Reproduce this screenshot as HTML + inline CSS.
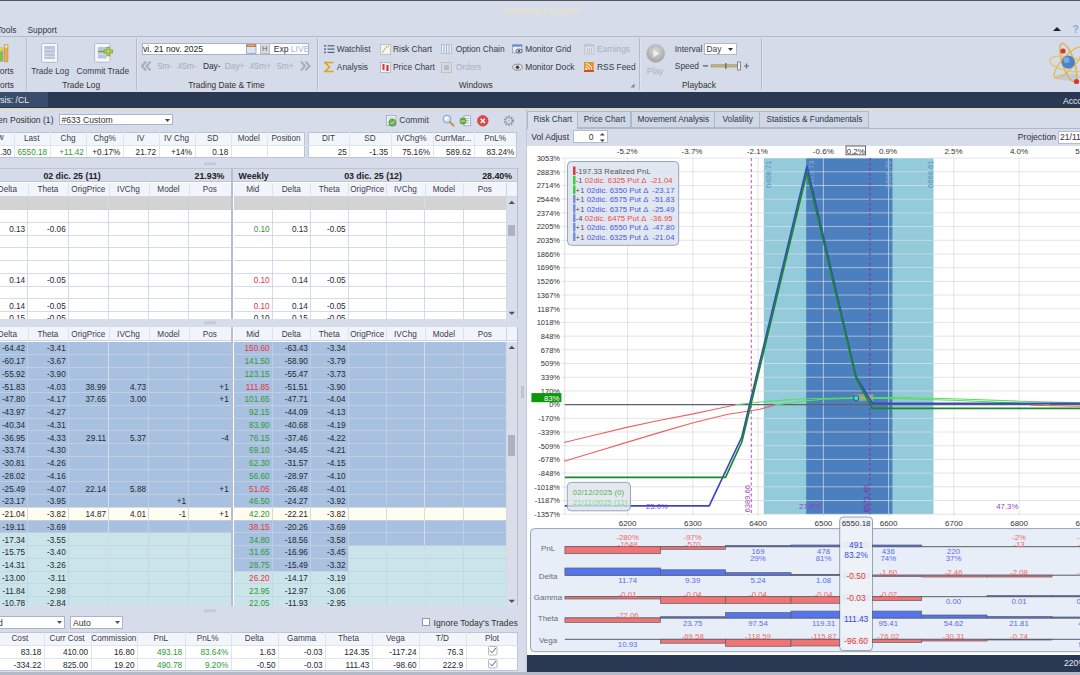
<!DOCTYPE html><html><head><meta charset="utf-8"><style>
html,body{margin:0;padding:0;width:1080px;height:675px;overflow:hidden;background:#d6dce9;}
body{position:relative;font-family:"Liberation Sans",sans-serif;font-size:8.2px;color:#363c4a;}
.t{position:absolute;white-space:nowrap;overflow:visible;}
</style></head><body>
<div style="position:absolute;left:0.00px;top:0.00px;width:1080.00px;height:1.30px;background:#50555f"></div>
<div style="position:absolute;left:0.00px;top:1.30px;width:1080.00px;height:35.00px;background:#d6dce9"></div>
<div class="t" style="left:442.00px;top:5.00px;width:200.00px;height:12.00px;line-height:12.00px;text-align:center;color:#ebe3c3;font-size:8.6px">OptionNET Explorer</div>
<div class="t" style="left:-283.50px;top:23.60px;width:300.00px;height:12.00px;line-height:12.00px;text-align:right;font-size:8.4px;color:#2f3a4a">Tools</div>
<div class="t" style="left:27.50px;top:23.60px;width:300.00px;height:12.00px;line-height:12.00px;text-align:left;font-size:8.4px;color:#2f3a4a">Support</div>
<svg style="position:absolute;left:1052px;top:26px" width="10" height="6"><path d="M1 5 L5 1 L9 5 Z" fill="#222"/></svg>
<div class="t" style="left:1072.50px;top:23.50px;width:300.00px;height:12.00px;line-height:12.00px;text-align:left;color:#7ab0e0;font-weight:bold;font-size:10px">?</div>
<div style="position:absolute;left:0.00px;top:36.00px;width:1080.00px;height:1.00px;background:#b3bbca"></div>
<div style="position:absolute;left:0.00px;top:37.00px;width:1080.00px;height:54.60px;background:#d5dbe8"></div>
<div style="position:absolute;left:25.60px;top:38.00px;width:1.00px;height:52.00px;background:#b4bccb"></div>
<div style="position:absolute;left:26.60px;top:38.00px;width:1.00px;height:52.00px;background:#dfe4ee"></div>
<div style="position:absolute;left:135.60px;top:38.00px;width:1.00px;height:52.00px;background:#b4bccb"></div>
<div style="position:absolute;left:136.60px;top:38.00px;width:1.00px;height:52.00px;background:#dfe4ee"></div>
<div style="position:absolute;left:317.00px;top:38.00px;width:1.00px;height:52.00px;background:#b4bccb"></div>
<div style="position:absolute;left:318.00px;top:38.00px;width:1.00px;height:52.00px;background:#dfe4ee"></div>
<div style="position:absolute;left:638.70px;top:38.00px;width:1.00px;height:52.00px;background:#b4bccb"></div>
<div style="position:absolute;left:639.70px;top:38.00px;width:1.00px;height:52.00px;background:#dfe4ee"></div>
<div style="position:absolute;left:760.60px;top:38.00px;width:1.00px;height:52.00px;background:#b4bccb"></div>
<div style="position:absolute;left:761.60px;top:38.00px;width:1.00px;height:52.00px;background:#dfe4ee"></div>
<svg style="position:absolute;left:0px;top:44px" width="12" height="19"><rect x="0" y="3.6" width="3.3" height="14.2" fill="#8cb860"/><path d="M0 3.6 L3.3 3.6 L3.3 6 L0 8 Z" fill="#e0d050"/><rect x="4.3" y="0.3" width="3.6" height="17.5" rx="0.8" fill="#e8b050" stroke="#b88040" stroke-width="0.6"/><rect x="4.8" y="0.8" width="2.6" height="3" fill="#f4e0a8"/></svg>
<div class="t" style="left:-286.20px;top:65.30px;width:300.00px;height:12.00px;line-height:12.00px;text-align:right;font-size:8.4px">orts</div>
<div class="t" style="left:-286.00px;top:79.00px;width:300.00px;height:12.00px;line-height:12.00px;text-align:right;font-size:8.4px;color:#333">orts</div>
<svg style="position:absolute;left:41px;top:43px" width="18" height="20"><rect x="0.6" y="0.4" width="16" height="19" rx="1.2" fill="#f6f8fc" stroke="#a8b6cc" stroke-width="0.9"/><rect x="3.3" y="3" width="10.7" height="13" fill="#b9c6dd"/><g fill="#d4ddec"><rect x="3.3" y="6" width="10.7" height="1.1"/><rect x="3.3" y="9.6" width="10.7" height="1.1"/><rect x="3.3" y="13" width="10.7" height="1.1"/></g></svg>
<div class="t" style="left:-49.80px;top:65.30px;width:200.00px;height:12.00px;line-height:12.00px;text-align:center;font-size:8.4px">Trade Log</div>
<svg style="position:absolute;left:93.5px;top:43px" width="21" height="20"><rect x="0.6" y="0.4" width="15.4" height="18.8" rx="1.2" fill="#f6f8fc" stroke="#a8b6cc" stroke-width="0.9"/><rect x="3.8" y="4" width="8.8" height="11.5" fill="#b9c6dd"/><rect x="3.8" y="11" width="8.8" height="1" fill="#d4ddec"/><rect x="4" y="7.9" width="7" height="1.1" fill="#70a040"/><path d="M12.9 4.2 h2.8 v2.9 h2.9 v2.8 h-2.9 v2.9 h-2.8 v-2.9 h-2.9 v-2.8 h2.9 z" fill="#c8c850" stroke="#58a838" stroke-width="0.8"/></svg>
<div class="t" style="left:2.80px;top:65.30px;width:200.00px;height:12.00px;line-height:12.00px;text-align:center;font-size:8.4px">Commit Trade</div>
<div class="t" style="left:-18.80px;top:79.00px;width:200.00px;height:12.00px;line-height:12.00px;text-align:center;font-size:8.4px;color:#333">Trade Log</div>
<div style="position:absolute;left:141.60px;top:42.60px;width:167.10px;height:12.50px;background:#fff;border:1px solid #a9b4c6;box-sizing:border-box"></div>
<div class="t" style="left:143.00px;top:43.00px;width:300.00px;height:12.00px;line-height:12.00px;text-align:left;font-size:8.6px;color:#222">vi. 21 nov. 2025</div>
<svg style="position:absolute;left:246px;top:44px" width="11" height="10"><rect x="0.5" y="0.5" width="9.5" height="9" fill="#dce4f0" stroke="#8aa0c0" stroke-width="0.8"/><rect x="0.5" y="0.5" width="9.5" height="2.5" fill="#e07050"/><rect x="2" y="1" width="6" height="1" fill="#e8b040"/></svg>
<div style="position:absolute;left:259.60px;top:43.40px;width:10.20px;height:10.80px;background:#d9dbe0;border:1px solid #b8bcc4;box-sizing:border-box"></div>
<div class="t" style="left:164.70px;top:43.00px;width:200.00px;height:12.00px;line-height:12.00px;text-align:center;font-size:7.5px;color:#666">H</div>
<div class="t" style="left:273.70px;top:43.00px;width:300.00px;height:12.00px;line-height:12.00px;text-align:left;font-size:8.6px;color:#2a3040">Exp</div>
<div class="t" style="left:290.80px;top:43.00px;width:300.00px;height:12.00px;line-height:12.00px;text-align:left;font-size:8.6px;color:#a9b5c8">LIVE</div>
<svg style="position:absolute;left:141px;top:61px" width="11" height="10"><path d="M5 0.5 L1 5 L5 9.5 M9.5 0.5 L5.5 5 L9.5 9.5" fill="none" stroke="#a8adb8" stroke-width="2"/></svg>
<svg style="position:absolute;left:300px;top:61px" width="11" height="10"><path d="M1 0.5 L5 5 L1 9.5 M5.5 0.5 L9.5 5 L5.5 9.5" fill="none" stroke="#a8adb8" stroke-width="2"/></svg>
<div class="t" style="left:157.70px;top:59.60px;width:300.00px;height:12.00px;line-height:12.00px;text-align:left;color:#a3aec2;font-size:8.4px">5m-</div>
<div class="t" style="left:177.50px;top:59.60px;width:300.00px;height:12.00px;line-height:12.00px;text-align:left;color:#a3aec2;font-size:8.4px">45m-</div>
<div class="t" style="left:202.90px;top:59.60px;width:300.00px;height:12.00px;line-height:12.00px;text-align:left;font-size:8.4px;color:#2a3040">Day-</div>
<div class="t" style="left:224.70px;top:59.60px;width:300.00px;height:12.00px;line-height:12.00px;text-align:left;color:#a3aec2;font-size:8.4px">Day+</div>
<div class="t" style="left:249.60px;top:59.60px;width:300.00px;height:12.00px;line-height:12.00px;text-align:left;color:#a3aec2;font-size:8.4px">45m+</div>
<div class="t" style="left:277.00px;top:59.60px;width:300.00px;height:12.00px;line-height:12.00px;text-align:left;color:#a3aec2;font-size:8.4px">5m+</div>
<div class="t" style="left:126.40px;top:79.00px;width:200.00px;height:12.00px;line-height:12.00px;text-align:center;font-size:8.4px;color:#333">Trading Date &amp; Time</div>
<svg style="position:absolute;left:323.5px;top:44px" width="11" height="10"><g fill="#5070a8"><rect x="0" y="1" width="2" height="1.6"/><rect x="0" y="4.3" width="2" height="1.6"/><rect x="0" y="7.6" width="2" height="1.6"/></g><g fill="#506080"><rect x="3.5" y="1.2" width="7" height="1.2"/><rect x="3.5" y="4.5" width="7" height="1.2"/><rect x="3.5" y="7.8" width="7" height="1.2"/></g></svg>
<div class="t" style="left:336.80px;top:43.10px;width:300.00px;height:12.00px;line-height:12.00px;text-align:left;font-size:8.4px">Watchlist</div>
<svg style="position:absolute;left:379.5px;top:43.5px" width="11" height="11"><rect x="0.5" y="0.5" width="10" height="10" fill="#f6f6f0" stroke="#b0b8c4" stroke-width="0.8"/><path d="M2 9 C4 8 4 3 9 2" fill="none" stroke="#c09040" stroke-width="0.9"/></svg>
<div class="t" style="left:393.00px;top:43.10px;width:300.00px;height:12.00px;line-height:12.00px;text-align:left;font-size:8.4px">Risk Chart</div>
<svg style="position:absolute;left:441.4px;top:44px" width="11" height="10"><rect x="0.5" y="0.5" width="10" height="9" fill="#eef2f8" stroke="#a8b8d0" stroke-width="0.8"/><g fill="#90b0d8"><rect x="2.5" y="1" width="1" height="8"/><rect x="5" y="1" width="1" height="8"/><rect x="7.5" y="1" width="1" height="8"/></g></svg>
<div class="t" style="left:455.70px;top:43.10px;width:300.00px;height:12.00px;line-height:12.00px;text-align:left;font-size:8.4px">Option Chain</div>
<svg style="position:absolute;left:511.5px;top:44px" width="12" height="11"><rect x="0.5" y="0.8" width="9.5" height="8" fill="#e6ecf6" stroke="#7a94bc" stroke-width="0.7"/><rect x="0.5" y="0.8" width="9.5" height="1.8" fill="#5a8ad0"/><ellipse cx="7" cy="7" rx="3.2" ry="2" fill="#d8dde6" stroke="#3a4458" stroke-width="0.7"/><circle cx="7" cy="7" r="1" fill="#2a3040"/></svg>
<div class="t" style="left:525.20px;top:43.10px;width:300.00px;height:12.00px;line-height:12.00px;text-align:left;font-size:8.4px">Monitor Grid</div>
<svg style="position:absolute;left:583.5px;top:43.5px" width="11" height="11"><rect x="0.5" y="0.5" width="9.5" height="9.5" rx="1" fill="#e0e2e6" stroke="#b8bcc4" stroke-width="0.8"/><rect x="0.5" y="0.5" width="9.5" height="2.2" fill="#c4c8ce"/><g fill="#b8bcc4"><rect x="3" y="4" width="0.8" height="5"/><rect x="5" y="4" width="0.8" height="5"/><rect x="7" y="4" width="0.8" height="5"/></g></svg>
<div class="t" style="left:597.00px;top:43.10px;width:300.00px;height:12.00px;line-height:12.00px;text-align:left;font-size:8.4px;color:#a8b2c4">Earnings</div>
<svg style="position:absolute;left:323.5px;top:61px" width="11" height="12"><path d="M9.5 1.5 H1 L5.5 6 L1 10.5 H9.5" fill="none" stroke="#e0a020" stroke-width="1.6"/></svg>
<div class="t" style="left:336.80px;top:60.80px;width:300.00px;height:12.00px;line-height:12.00px;text-align:left;font-size:8.4px">Analysis</div>
<svg style="position:absolute;left:380px;top:61.5px" width="11" height="11"><rect x="0.5" y="0.5" width="10" height="10" fill="#f4f0f0" stroke="#a8b0bc" stroke-width="0.8"/><rect x="2.5" y="2" width="2" height="6" fill="#e03030"/><rect x="6.5" y="3" width="2" height="6" fill="#d02828"/></svg>
<div class="t" style="left:393.00px;top:60.80px;width:300.00px;height:12.00px;line-height:12.00px;text-align:left;font-size:8.4px">Price Chart</div>
<svg style="position:absolute;left:441.4px;top:61.5px" width="11" height="11"><rect x="0.5" y="0.5" width="10" height="10" fill="#d8dade" stroke="#b8bcc4" stroke-width="0.8"/><rect x="3" y="3" width="5" height="5" fill="#b8bcc4"/></svg>
<div class="t" style="left:455.70px;top:60.80px;width:300.00px;height:12.00px;line-height:12.00px;text-align:left;font-size:8.4px;color:#a8b2c4">Orders</div>
<svg style="position:absolute;left:511.5px;top:62.5px" width="11" height="9"><ellipse cx="5.5" cy="4.2" rx="4.8" ry="3" fill="#dfe3ea" stroke="#8a7060" stroke-width="0.8"/><circle cx="5.5" cy="4.2" r="1.8" fill="#38425a"/></svg>
<div class="t" style="left:525.20px;top:60.80px;width:300.00px;height:12.00px;line-height:12.00px;text-align:left;font-size:8.4px">Monitor Dock</div>
<svg style="position:absolute;left:583.5px;top:61.5px" width="11" height="11"><rect x="0" y="0" width="9.8" height="9.8" fill="#e89030"/><rect x="0" y="8.3" width="9.8" height="1.5" fill="#d03818"/><circle cx="2.3" cy="7" r="1" fill="#fff"/><path d="M1.8 4 A3.5 3.5 0 0 1 5.3 7.5 M1.8 1.6 A5.9 5.9 0 0 1 7.7 7.5" fill="none" stroke="#fff" stroke-width="1"/></svg>
<div class="t" style="left:597.00px;top:60.80px;width:300.00px;height:12.00px;line-height:12.00px;text-align:left;font-size:8.4px">RSS Feed</div>
<div class="t" style="left:375.70px;top:78.90px;width:200.00px;height:12.00px;line-height:12.00px;text-align:center;font-size:8.4px;color:#333">Windows</div>
<svg style="position:absolute;left:630px;top:83px" width="5" height="5"><path d="M4.5 0.5 V4.5 H0.5 Z" fill="#7a8494"/></svg>
<svg style="position:absolute;left:645.5px;top:43.5px" width="20" height="20"><defs><radialGradient id="pg" cx="50%" cy="35%" r="60%"><stop offset="0" stop-color="#d8d8d8"/><stop offset="1" stop-color="#a8a8aa"/></radialGradient></defs><circle cx="9.7" cy="9.5" r="9" fill="url(#pg)" stroke="#b0b0b4" stroke-width="0.6"/><path d="M7.3 5.5 L13.5 9.5 L7.3 13.5 Z" fill="#eeeeee"/></svg>
<div class="t" style="left:555.00px;top:64.80px;width:200.00px;height:12.00px;line-height:12.00px;text-align:center;font-size:8.4px;color:#a8b2c4">Play</div>
<div class="t" style="left:674.80px;top:43.30px;width:300.00px;height:12.00px;line-height:12.00px;text-align:left;font-size:8.4px">Interval</div>
<div style="position:absolute;left:703.60px;top:42.80px;width:33.40px;height:12.40px;background:#fff;border:1px solid #b0bacb;box-sizing:border-box"></div>
<div class="t" style="left:706.50px;top:43.00px;width:300.00px;height:12.00px;line-height:12.00px;text-align:left;font-size:8.4px">Day</div>
<svg style="position:absolute;left:728px;top:47.5px" width="6" height="4"><path d="M0 0 H5 L2.5 3 Z" fill="#333"/></svg>
<div class="t" style="left:674.80px;top:60.10px;width:300.00px;height:12.00px;line-height:12.00px;text-align:left;font-size:8.4px">Speed</div>
<svg style="position:absolute;left:702px;top:61px" width="50" height="10"><rect x="1" y="4.2" width="5" height="1.4" fill="#606a7a"/><rect x="9" y="3.8" width="29" height="2.2" fill="#c8b878" stroke="#8a8060" stroke-width="0.5"/><rect x="23" y="2" width="1.5" height="6" fill="#707070"/><rect x="35.5" y="1" width="3" height="8" fill="#f0f0f0" stroke="#606060" stroke-width="0.7"/><path d="M42 5 h5 M44.5 2.5 v5" stroke="#606a7a" stroke-width="1.2"/></svg>
<div class="t" style="left:599.00px;top:78.80px;width:200.00px;height:12.00px;line-height:12.00px;text-align:center;font-size:8.4px;color:#333">Playback</div>
<svg style="position:absolute;left:1046px;top:40px" width="40" height="46" viewBox="0 0 40 46">
<ellipse cx="22" cy="37" rx="13" ry="3.5" fill="#b0b6c4" opacity="0.45"/>
<ellipse cx="22.3" cy="22.5" rx="20" ry="6.5" transform="rotate(-48 22.3 22.5)" fill="none" stroke="#e2bc58" stroke-width="1.5"/>
<ellipse cx="22.3" cy="22.5" rx="20" ry="6" transform="rotate(72 22.3 22.5)" fill="none" stroke="#dcb450" stroke-width="1.5"/>
<ellipse cx="22.3" cy="24" rx="19" ry="7" transform="rotate(12 22.3 24)" fill="none" stroke="#e6c468" stroke-width="1.3"/>
<circle cx="22.3" cy="22.2" r="6.6" fill="#4d82c8"/><circle cx="20.5" cy="20" r="3" fill="#8ab4e8" opacity="0.8"/>
<circle cx="17" cy="11" r="2.6" fill="#d83828"/><circle cx="30.5" cy="41.5" r="2.6" fill="#d83828"/>
</svg>
<div style="position:absolute;left:0.00px;top:91.60px;width:1080.00px;height:16.00px;background:#293853"></div>
<div style="position:absolute;left:0.00px;top:92.20px;width:48.00px;height:14.50px;background:#3b4d6c"></div>
<div class="t" style="left:-4.00px;top:93.50px;width:300.00px;height:12.00px;line-height:12.00px;text-align:left;color:#e8ecf4;font-size:8.6px">ysis: /CL</div>
<div class="t" style="left:1063.00px;top:94.80px;width:300.00px;height:12.00px;line-height:12.00px;text-align:left;color:#e8ecf4;font-size:8.6px">Acco</div>
<div style="position:absolute;left:0.00px;top:107.60px;width:1080.00px;height:1.60px;background:#e6dc9c"></div>
<div class="t" style="left:-246.50px;top:114.00px;width:300.00px;height:12.00px;line-height:12.00px;text-align:right;font-size:8.6px;color:#333">en Position (1)</div>
<div style="position:absolute;left:59.00px;top:114.30px;width:113.50px;height:11.20px;background:#fff;border:1px solid #aab4c4;box-sizing:border-box"></div>
<div class="t" style="left:61.50px;top:114.00px;width:300.00px;height:12.00px;line-height:12.00px;text-align:left;font-size:8.6px;color:#333">#633 Custom</div>
<svg style="position:absolute;left:164.5px;top:118.5px" width="6" height="4"><path d="M0 0 H5 L2.5 3 Z" fill="#444"/></svg>
<svg style="position:absolute;left:385.5px;top:114.5px" width="13" height="13"><rect x="0.5" y="0.5" width="9.5" height="10" fill="#f2f4f8" stroke="#98a6bc" stroke-width="0.8"/><rect x="2" y="2.5" width="6" height="1" fill="#b8c4d8"/><circle cx="6.3" cy="7.6" r="3.6" fill="#6ab04a" stroke="#4a8a30" stroke-width="0.6"/><path d="M4.4 7.6 l1.4 1.3 l2.4 -2.6" stroke="#e8f4e0" stroke-width="0.9" fill="none"/></svg>
<div class="t" style="left:399.30px;top:114.40px;width:300.00px;height:12.00px;line-height:12.00px;text-align:left;font-size:8.6px;color:#3a4050">Commit</div>
<svg style="position:absolute;left:441.5px;top:114px" width="13" height="13"><circle cx="5" cy="5" r="3.9" fill="#d4e6f6" stroke="#7aa2cc" stroke-width="1"/><circle cx="4.2" cy="4.2" r="1.6" fill="#f4faff"/><path d="M7.8 7.8 L11.5 11.5" stroke="#c8903c" stroke-width="1.8" stroke-linecap="round"/></svg>
<svg style="position:absolute;left:459px;top:114.5px" width="13" height="12"><rect x="5" y="0.8" width="6.5" height="10" fill="#f4f6f8" stroke="#8a9aae" stroke-width="0.7"/><g fill="#9aa8bc"><rect x="7" y="3" width="3" height="0.8"/><rect x="7" y="5.3" width="3" height="0.8"/><rect x="7" y="7.6" width="3" height="0.8"/></g><circle cx="4" cy="6" r="3.4" fill="#5aa848"/><rect x="1.5" y="5.5" width="4.5" height="1.2" fill="#e8d060"/></svg>
<svg style="position:absolute;left:476.5px;top:114.5px" width="12" height="12"><circle cx="5.8" cy="5.8" r="5.3" fill="#e04848" stroke="#c03030" stroke-width="0.6"/><path d="M3.7 3.7 L7.9 7.9 M7.9 3.7 L3.7 7.9" stroke="#fff" stroke-width="1.4"/></svg>
<svg style="position:absolute;left:503px;top:114.5px" width="12" height="12"><circle cx="5.8" cy="5.8" r="4.2" fill="none" stroke="#8a92a4" stroke-width="2" stroke-dasharray="1.5 1.2"/><circle cx="5.8" cy="5.8" r="3" fill="#e4e8ee" stroke="#8a92a4" stroke-width="0.8"/><circle cx="5.8" cy="5.8" r="1.2" fill="#b8c0cc"/></svg>
<div style="position:absolute;left:-22.00px;top:131.60px;width:327.10px;height:26.90px;background:#fff;border:1px solid #bcc5d4;box-sizing:border-box"></div>
<div style="position:absolute;left:-21.00px;top:132.60px;width:325.10px;height:12.20px;background:#f2f6fb"></div>
<div style="position:absolute;left:-22.00px;top:144.80px;width:327.10px;height:1.00px;background:#dfe5ee"></div>
<div style="position:absolute;left:13.80px;top:131.60px;width:1.00px;height:25.90px;background:#dfe5ee"></div>
<div style="position:absolute;left:49.60px;top:131.60px;width:1.00px;height:25.90px;background:#dfe5ee"></div>
<div style="position:absolute;left:86.40px;top:131.60px;width:1.00px;height:25.90px;background:#dfe5ee"></div>
<div style="position:absolute;left:122.80px;top:131.60px;width:1.00px;height:25.90px;background:#dfe5ee"></div>
<div style="position:absolute;left:158.60px;top:131.60px;width:1.00px;height:25.90px;background:#dfe5ee"></div>
<div style="position:absolute;left:194.60px;top:131.60px;width:1.00px;height:25.90px;background:#dfe5ee"></div>
<div style="position:absolute;left:230.70px;top:131.60px;width:1.00px;height:25.90px;background:#dfe5ee"></div>
<div style="position:absolute;left:266.90px;top:131.60px;width:1.00px;height:25.90px;background:#dfe5ee"></div>
<div class="t" style="left:-32.00px;top:132.50px;width:55.80px;height:12.00px;line-height:12.00px;text-align:center;font-size:8.2px;color:#242830;color:#3a3a4a"></div>
<div class="t" style="left:3.80px;top:132.50px;width:55.80px;height:12.00px;line-height:12.00px;text-align:center;font-size:8.2px;color:#242830;color:#3a3a4a">Last</div>
<div class="t" style="left:39.60px;top:132.50px;width:56.80px;height:12.00px;line-height:12.00px;text-align:center;font-size:8.2px;color:#242830;color:#3a3a4a">Chg</div>
<div class="t" style="left:76.40px;top:132.50px;width:56.40px;height:12.00px;line-height:12.00px;text-align:center;font-size:8.2px;color:#242830;color:#3a3a4a">Chg%</div>
<div class="t" style="left:112.80px;top:132.50px;width:55.80px;height:12.00px;line-height:12.00px;text-align:center;font-size:8.2px;color:#242830;color:#3a3a4a">IV</div>
<div class="t" style="left:148.60px;top:132.50px;width:56.00px;height:12.00px;line-height:12.00px;text-align:center;font-size:8.2px;color:#242830;color:#3a3a4a">IV Chg</div>
<div class="t" style="left:184.60px;top:132.50px;width:56.10px;height:12.00px;line-height:12.00px;text-align:center;font-size:8.2px;color:#242830;color:#3a3a4a">SD</div>
<div class="t" style="left:220.70px;top:132.50px;width:56.20px;height:12.00px;line-height:12.00px;text-align:center;font-size:8.2px;color:#242830;color:#3a3a4a">Model</div>
<div class="t" style="left:256.90px;top:132.50px;width:58.20px;height:12.00px;line-height:12.00px;text-align:center;font-size:8.2px;color:#242830;color:#3a3a4a">Position</div>
<div class="t" style="left:-288.70px;top:146.65px;width:300.00px;height:12.00px;line-height:12.00px;text-align:right;font-size:8.2px;color:#242830;">.30</div>
<div class="t" style="left:-252.90px;top:146.65px;width:300.00px;height:12.00px;line-height:12.00px;text-align:right;font-size:8.2px;color:#242830;color:#2e9a32;">6550.18</div>
<div class="t" style="left:-216.10px;top:146.65px;width:300.00px;height:12.00px;line-height:12.00px;text-align:right;font-size:8.2px;color:#242830;color:#2e9a32;">+11.42</div>
<div class="t" style="left:-179.70px;top:146.65px;width:300.00px;height:12.00px;line-height:12.00px;text-align:right;font-size:8.2px;color:#242830;">+0.17%</div>
<div class="t" style="left:-143.90px;top:146.65px;width:300.00px;height:12.00px;line-height:12.00px;text-align:right;font-size:8.2px;color:#242830;">21.72</div>
<div class="t" style="left:-107.90px;top:146.65px;width:300.00px;height:12.00px;line-height:12.00px;text-align:right;font-size:8.2px;color:#242830;">+14%</div>
<div class="t" style="left:-71.80px;top:146.65px;width:300.00px;height:12.00px;line-height:12.00px;text-align:right;font-size:8.2px;color:#242830;">0.18</div>
<div class="t" style="left:-296.30px;top:132.40px;width:300.00px;height:12.00px;line-height:12.00px;text-align:right;font-size:8.2px;color:#242830;color:#3a3a4a">w</div>
<div style="position:absolute;left:307.70px;top:131.60px;width:209.10px;height:26.90px;background:#fff;border:1px solid #bcc5d4;box-sizing:border-box"></div>
<div style="position:absolute;left:308.70px;top:132.60px;width:207.10px;height:12.20px;background:#f2f6fb"></div>
<div style="position:absolute;left:307.70px;top:144.80px;width:209.10px;height:1.00px;background:#dfe5ee"></div>
<div style="position:absolute;left:349.40px;top:131.60px;width:1.00px;height:25.90px;background:#dfe5ee"></div>
<div style="position:absolute;left:390.50px;top:131.60px;width:1.00px;height:25.90px;background:#dfe5ee"></div>
<div style="position:absolute;left:432.50px;top:131.60px;width:1.00px;height:25.90px;background:#dfe5ee"></div>
<div style="position:absolute;left:473.60px;top:131.60px;width:1.00px;height:25.90px;background:#dfe5ee"></div>
<div class="t" style="left:297.70px;top:132.50px;width:61.70px;height:12.00px;line-height:12.00px;text-align:center;font-size:8.2px;color:#242830;color:#3a3a4a">DIT</div>
<div class="t" style="left:339.40px;top:132.50px;width:61.10px;height:12.00px;line-height:12.00px;text-align:center;font-size:8.2px;color:#242830;color:#3a3a4a">SD</div>
<div class="t" style="left:380.50px;top:132.50px;width:62.00px;height:12.00px;line-height:12.00px;text-align:center;font-size:8.2px;color:#242830;color:#3a3a4a">IVChg%</div>
<div class="t" style="left:422.50px;top:132.50px;width:61.10px;height:12.00px;line-height:12.00px;text-align:center;font-size:8.2px;color:#242830;color:#3a3a4a">CurrMar...</div>
<div class="t" style="left:463.60px;top:132.50px;width:63.20px;height:12.00px;line-height:12.00px;text-align:center;font-size:8.2px;color:#242830;color:#3a3a4a">PnL%</div>
<div class="t" style="left:46.90px;top:146.65px;width:300.00px;height:12.00px;line-height:12.00px;text-align:right;font-size:8.2px;color:#242830;">25</div>
<div class="t" style="left:88.00px;top:146.65px;width:300.00px;height:12.00px;line-height:12.00px;text-align:right;font-size:8.2px;color:#242830;">-1.35</div>
<div class="t" style="left:130.00px;top:146.65px;width:300.00px;height:12.00px;line-height:12.00px;text-align:right;font-size:8.2px;color:#242830;">75.16%</div>
<div class="t" style="left:171.10px;top:146.65px;width:300.00px;height:12.00px;line-height:12.00px;text-align:right;font-size:8.2px;color:#242830;">589.62</div>
<div class="t" style="left:214.30px;top:146.65px;width:300.00px;height:12.00px;line-height:12.00px;text-align:right;font-size:8.2px;color:#242830;">83.24%</div>
<svg style="position:absolute;left:204.0px;top:162.0px" width="13" height="4"><g stroke="#a3abbb" stroke-width="0.6" fill="none"><path d="M0.2 0.3 L2.6 3.2 M2.6 0.3 L0.2 3.2"/><path d="M3.2 0.3 L5.6 3.2 M5.6 0.3 L3.2 3.2"/><path d="M6.2 0.3 L8.6 3.2 M8.6 0.3 L6.2 3.2"/><path d="M9.2 0.3 L11.6 3.2 M11.6 0.3 L9.2 3.2"/></g></svg>
<div style="position:absolute;left:-2.00px;top:168.30px;width:235.10px;height:151.10px;background:#fff"></div>
<div style="position:absolute;left:231.20px;top:168.30px;width:2.60px;height:151.10px;background:#b6bfcd"></div>
<div style="position:absolute;left:233.10px;top:168.30px;width:284.30px;height:151.10px;background:#fff"></div>
<div style="position:absolute;left:517.40px;top:168.30px;width:1.00px;height:151.10px;background:#b6bfcd"></div>
<div style="position:absolute;left:-2.00px;top:168.30px;width:233.20px;height:14.20px;background:#d5dbe8;border-bottom:1px solid #bcc5d3;box-sizing:border-box"></div>
<div style="position:absolute;left:233.10px;top:168.30px;width:284.30px;height:14.20px;background:#d5dbe8;border-bottom:1px solid #bcc5d3;box-sizing:border-box"></div>
<div style="position:absolute;left:233.10px;top:168.30px;width:284.30px;height:1.00px;background:#bcc5d3"></div>
<div style="position:absolute;left:-2.00px;top:168.30px;width:233.20px;height:1.00px;background:#bcc5d3"></div>
<div style="position:absolute;left:-2.00px;top:182.50px;width:233.20px;height:14.30px;background:#f1f5fb;border-bottom:1px solid #d0d7e2;box-sizing:border-box"></div>
<div style="position:absolute;left:233.80px;top:182.50px;width:283.60px;height:14.30px;background:#f1f5fb;border-bottom:1px solid #d0d7e2;box-sizing:border-box"></div>
<div class="t" style="left:-22.80px;top:183.95px;width:60.40px;height:12.00px;line-height:12.00px;text-align:center;font-size:8.2px;color:#242830;color:#3a3a4a">Delta</div>
<div class="t" style="left:17.60px;top:183.95px;width:60.60px;height:12.00px;line-height:12.00px;text-align:center;font-size:8.2px;color:#242830;color:#3a3a4a">Theta</div>
<div class="t" style="left:58.20px;top:183.95px;width:60.30px;height:12.00px;line-height:12.00px;text-align:center;font-size:8.2px;color:#242830;color:#3a3a4a">OrigPrice</div>
<div class="t" style="left:98.50px;top:183.95px;width:60.00px;height:12.00px;line-height:12.00px;text-align:center;font-size:8.2px;color:#242830;color:#3a3a4a">IVChg</div>
<div class="t" style="left:138.50px;top:183.95px;width:60.00px;height:12.00px;line-height:12.00px;text-align:center;font-size:8.2px;color:#242830;color:#3a3a4a">Model</div>
<div class="t" style="left:178.50px;top:183.95px;width:62.70px;height:12.00px;line-height:12.00px;text-align:center;font-size:8.2px;color:#242830;color:#3a3a4a">Pos</div>
<div class="t" style="left:223.60px;top:183.95px;width:58.50px;height:12.00px;line-height:12.00px;text-align:center;font-size:8.2px;color:#242830;color:#3a3a4a">Mid</div>
<div class="t" style="left:262.10px;top:183.95px;width:58.30px;height:12.00px;line-height:12.00px;text-align:center;font-size:8.2px;color:#242830;color:#3a3a4a">Delta</div>
<div class="t" style="left:300.40px;top:183.95px;width:57.80px;height:12.00px;line-height:12.00px;text-align:center;font-size:8.2px;color:#242830;color:#3a3a4a">Theta</div>
<div class="t" style="left:338.20px;top:183.95px;width:58.20px;height:12.00px;line-height:12.00px;text-align:center;font-size:8.2px;color:#242830;color:#3a3a4a">OrigPrice</div>
<div class="t" style="left:376.40px;top:183.95px;width:58.10px;height:12.00px;line-height:12.00px;text-align:center;font-size:8.2px;color:#242830;color:#3a3a4a">IVChg</div>
<div class="t" style="left:414.50px;top:183.95px;width:58.80px;height:12.00px;line-height:12.00px;text-align:center;font-size:8.2px;color:#242830;color:#3a3a4a">Model</div>
<div class="t" style="left:453.30px;top:183.95px;width:63.00px;height:12.00px;line-height:12.00px;text-align:center;font-size:8.2px;color:#242830;color:#3a3a4a">Pos</div>
<div style="position:absolute;left:27.60px;top:182.50px;width:1.00px;height:14.30px;background:#dde3ec"></div>
<div style="position:absolute;left:68.20px;top:182.50px;width:1.00px;height:14.30px;background:#dde3ec"></div>
<div style="position:absolute;left:108.50px;top:182.50px;width:1.00px;height:14.30px;background:#dde3ec"></div>
<div style="position:absolute;left:148.50px;top:182.50px;width:1.00px;height:14.30px;background:#dde3ec"></div>
<div style="position:absolute;left:188.50px;top:182.50px;width:1.00px;height:14.30px;background:#dde3ec"></div>
<div style="position:absolute;left:272.10px;top:182.50px;width:1.00px;height:14.30px;background:#dde3ec"></div>
<div style="position:absolute;left:310.40px;top:182.50px;width:1.00px;height:14.30px;background:#dde3ec"></div>
<div style="position:absolute;left:348.20px;top:182.50px;width:1.00px;height:14.30px;background:#dde3ec"></div>
<div style="position:absolute;left:386.40px;top:182.50px;width:1.00px;height:14.30px;background:#dde3ec"></div>
<div style="position:absolute;left:424.50px;top:182.50px;width:1.00px;height:14.30px;background:#dde3ec"></div>
<div style="position:absolute;left:463.30px;top:182.50px;width:1.00px;height:14.30px;background:#dde3ec"></div>
<div style="position:absolute;left:506.30px;top:182.50px;width:1.00px;height:14.30px;background:#dde3ec"></div>
<div style="position:absolute;left:-2.00px;top:196.80px;width:29.60px;height:12.75px;background:#d3d3d3"></div>
<div style="position:absolute;left:27.60px;top:196.80px;width:40.60px;height:12.75px;background:#d3d3d3"></div>
<div style="position:absolute;left:68.20px;top:196.80px;width:40.30px;height:12.75px;background:#d3d3d3"></div>
<div style="position:absolute;left:108.50px;top:196.80px;width:40.00px;height:12.75px;background:#d3d3d3"></div>
<div style="position:absolute;left:148.50px;top:196.80px;width:40.00px;height:12.75px;background:#d3d3d3"></div>
<div style="position:absolute;left:188.50px;top:196.80px;width:42.70px;height:12.75px;background:#d3d3d3"></div>
<div style="position:absolute;left:233.60px;top:196.80px;width:38.50px;height:12.75px;background:#d3d3d3"></div>
<div style="position:absolute;left:272.10px;top:196.80px;width:38.30px;height:12.75px;background:#d3d3d3"></div>
<div style="position:absolute;left:310.40px;top:196.80px;width:37.80px;height:12.75px;background:#d3d3d3"></div>
<div style="position:absolute;left:348.20px;top:196.80px;width:38.20px;height:12.75px;background:#d3d3d3"></div>
<div style="position:absolute;left:386.40px;top:196.80px;width:38.10px;height:12.75px;background:#d3d3d3"></div>
<div style="position:absolute;left:424.50px;top:196.80px;width:38.80px;height:12.75px;background:#d3d3d3"></div>
<div style="position:absolute;left:463.30px;top:196.80px;width:43.00px;height:12.75px;background:#d3d3d3"></div>
<div style="position:absolute;left:-2.00px;top:209.55px;width:29.60px;height:12.75px;background:#ffffff"></div>
<div style="position:absolute;left:27.60px;top:209.55px;width:40.60px;height:12.75px;background:#ffffff"></div>
<div style="position:absolute;left:68.20px;top:209.55px;width:40.30px;height:12.75px;background:#ffffff"></div>
<div style="position:absolute;left:108.50px;top:209.55px;width:40.00px;height:12.75px;background:#ffffff"></div>
<div style="position:absolute;left:148.50px;top:209.55px;width:40.00px;height:12.75px;background:#ffffff"></div>
<div style="position:absolute;left:188.50px;top:209.55px;width:42.70px;height:12.75px;background:#ffffff"></div>
<div style="position:absolute;left:233.60px;top:209.55px;width:38.50px;height:12.75px;background:#ffffff"></div>
<div style="position:absolute;left:272.10px;top:209.55px;width:38.30px;height:12.75px;background:#ffffff"></div>
<div style="position:absolute;left:310.40px;top:209.55px;width:37.80px;height:12.75px;background:#ffffff"></div>
<div style="position:absolute;left:348.20px;top:209.55px;width:38.20px;height:12.75px;background:#ffffff"></div>
<div style="position:absolute;left:386.40px;top:209.55px;width:38.10px;height:12.75px;background:#ffffff"></div>
<div style="position:absolute;left:424.50px;top:209.55px;width:38.80px;height:12.75px;background:#ffffff"></div>
<div style="position:absolute;left:463.30px;top:209.55px;width:43.00px;height:12.75px;background:#ffffff"></div>
<div style="position:absolute;left:-2.00px;top:222.30px;width:29.60px;height:12.75px;background:#ffffff"></div>
<div style="position:absolute;left:27.60px;top:222.30px;width:40.60px;height:12.75px;background:#ffffff"></div>
<div style="position:absolute;left:68.20px;top:222.30px;width:40.30px;height:12.75px;background:#ffffff"></div>
<div style="position:absolute;left:108.50px;top:222.30px;width:40.00px;height:12.75px;background:#ffffff"></div>
<div style="position:absolute;left:148.50px;top:222.30px;width:40.00px;height:12.75px;background:#ffffff"></div>
<div style="position:absolute;left:188.50px;top:222.30px;width:42.70px;height:12.75px;background:#ffffff"></div>
<div style="position:absolute;left:233.60px;top:222.30px;width:38.50px;height:12.75px;background:#ffffff"></div>
<div style="position:absolute;left:272.10px;top:222.30px;width:38.30px;height:12.75px;background:#ffffff"></div>
<div style="position:absolute;left:310.40px;top:222.30px;width:37.80px;height:12.75px;background:#ffffff"></div>
<div style="position:absolute;left:348.20px;top:222.30px;width:38.20px;height:12.75px;background:#ffffff"></div>
<div style="position:absolute;left:386.40px;top:222.30px;width:38.10px;height:12.75px;background:#ffffff"></div>
<div style="position:absolute;left:424.50px;top:222.30px;width:38.80px;height:12.75px;background:#ffffff"></div>
<div style="position:absolute;left:463.30px;top:222.30px;width:43.00px;height:12.75px;background:#ffffff"></div>
<div style="position:absolute;left:-2.00px;top:235.05px;width:29.60px;height:12.75px;background:#ffffff"></div>
<div style="position:absolute;left:27.60px;top:235.05px;width:40.60px;height:12.75px;background:#ffffff"></div>
<div style="position:absolute;left:68.20px;top:235.05px;width:40.30px;height:12.75px;background:#ffffff"></div>
<div style="position:absolute;left:108.50px;top:235.05px;width:40.00px;height:12.75px;background:#ffffff"></div>
<div style="position:absolute;left:148.50px;top:235.05px;width:40.00px;height:12.75px;background:#ffffff"></div>
<div style="position:absolute;left:188.50px;top:235.05px;width:42.70px;height:12.75px;background:#ffffff"></div>
<div style="position:absolute;left:233.60px;top:235.05px;width:38.50px;height:12.75px;background:#ffffff"></div>
<div style="position:absolute;left:272.10px;top:235.05px;width:38.30px;height:12.75px;background:#ffffff"></div>
<div style="position:absolute;left:310.40px;top:235.05px;width:37.80px;height:12.75px;background:#ffffff"></div>
<div style="position:absolute;left:348.20px;top:235.05px;width:38.20px;height:12.75px;background:#ffffff"></div>
<div style="position:absolute;left:386.40px;top:235.05px;width:38.10px;height:12.75px;background:#ffffff"></div>
<div style="position:absolute;left:424.50px;top:235.05px;width:38.80px;height:12.75px;background:#ffffff"></div>
<div style="position:absolute;left:463.30px;top:235.05px;width:43.00px;height:12.75px;background:#ffffff"></div>
<div style="position:absolute;left:-2.00px;top:247.80px;width:29.60px;height:12.75px;background:#ffffff"></div>
<div style="position:absolute;left:27.60px;top:247.80px;width:40.60px;height:12.75px;background:#ffffff"></div>
<div style="position:absolute;left:68.20px;top:247.80px;width:40.30px;height:12.75px;background:#ffffff"></div>
<div style="position:absolute;left:108.50px;top:247.80px;width:40.00px;height:12.75px;background:#ffffff"></div>
<div style="position:absolute;left:148.50px;top:247.80px;width:40.00px;height:12.75px;background:#ffffff"></div>
<div style="position:absolute;left:188.50px;top:247.80px;width:42.70px;height:12.75px;background:#ffffff"></div>
<div style="position:absolute;left:233.60px;top:247.80px;width:38.50px;height:12.75px;background:#ffffff"></div>
<div style="position:absolute;left:272.10px;top:247.80px;width:38.30px;height:12.75px;background:#ffffff"></div>
<div style="position:absolute;left:310.40px;top:247.80px;width:37.80px;height:12.75px;background:#ffffff"></div>
<div style="position:absolute;left:348.20px;top:247.80px;width:38.20px;height:12.75px;background:#ffffff"></div>
<div style="position:absolute;left:386.40px;top:247.80px;width:38.10px;height:12.75px;background:#ffffff"></div>
<div style="position:absolute;left:424.50px;top:247.80px;width:38.80px;height:12.75px;background:#ffffff"></div>
<div style="position:absolute;left:463.30px;top:247.80px;width:43.00px;height:12.75px;background:#ffffff"></div>
<div style="position:absolute;left:-2.00px;top:260.55px;width:29.60px;height:12.75px;background:#ffffff"></div>
<div style="position:absolute;left:27.60px;top:260.55px;width:40.60px;height:12.75px;background:#ffffff"></div>
<div style="position:absolute;left:68.20px;top:260.55px;width:40.30px;height:12.75px;background:#ffffff"></div>
<div style="position:absolute;left:108.50px;top:260.55px;width:40.00px;height:12.75px;background:#ffffff"></div>
<div style="position:absolute;left:148.50px;top:260.55px;width:40.00px;height:12.75px;background:#ffffff"></div>
<div style="position:absolute;left:188.50px;top:260.55px;width:42.70px;height:12.75px;background:#ffffff"></div>
<div style="position:absolute;left:233.60px;top:260.55px;width:38.50px;height:12.75px;background:#ffffff"></div>
<div style="position:absolute;left:272.10px;top:260.55px;width:38.30px;height:12.75px;background:#ffffff"></div>
<div style="position:absolute;left:310.40px;top:260.55px;width:37.80px;height:12.75px;background:#ffffff"></div>
<div style="position:absolute;left:348.20px;top:260.55px;width:38.20px;height:12.75px;background:#ffffff"></div>
<div style="position:absolute;left:386.40px;top:260.55px;width:38.10px;height:12.75px;background:#ffffff"></div>
<div style="position:absolute;left:424.50px;top:260.55px;width:38.80px;height:12.75px;background:#ffffff"></div>
<div style="position:absolute;left:463.30px;top:260.55px;width:43.00px;height:12.75px;background:#ffffff"></div>
<div style="position:absolute;left:-2.00px;top:273.30px;width:29.60px;height:12.75px;background:#ffffff"></div>
<div style="position:absolute;left:27.60px;top:273.30px;width:40.60px;height:12.75px;background:#ffffff"></div>
<div style="position:absolute;left:68.20px;top:273.30px;width:40.30px;height:12.75px;background:#ffffff"></div>
<div style="position:absolute;left:108.50px;top:273.30px;width:40.00px;height:12.75px;background:#ffffff"></div>
<div style="position:absolute;left:148.50px;top:273.30px;width:40.00px;height:12.75px;background:#ffffff"></div>
<div style="position:absolute;left:188.50px;top:273.30px;width:42.70px;height:12.75px;background:#ffffff"></div>
<div style="position:absolute;left:233.60px;top:273.30px;width:38.50px;height:12.75px;background:#ffffff"></div>
<div style="position:absolute;left:272.10px;top:273.30px;width:38.30px;height:12.75px;background:#ffffff"></div>
<div style="position:absolute;left:310.40px;top:273.30px;width:37.80px;height:12.75px;background:#ffffff"></div>
<div style="position:absolute;left:348.20px;top:273.30px;width:38.20px;height:12.75px;background:#ffffff"></div>
<div style="position:absolute;left:386.40px;top:273.30px;width:38.10px;height:12.75px;background:#ffffff"></div>
<div style="position:absolute;left:424.50px;top:273.30px;width:38.80px;height:12.75px;background:#ffffff"></div>
<div style="position:absolute;left:463.30px;top:273.30px;width:43.00px;height:12.75px;background:#ffffff"></div>
<div style="position:absolute;left:-2.00px;top:286.05px;width:29.60px;height:12.75px;background:#ffffff"></div>
<div style="position:absolute;left:27.60px;top:286.05px;width:40.60px;height:12.75px;background:#ffffff"></div>
<div style="position:absolute;left:68.20px;top:286.05px;width:40.30px;height:12.75px;background:#ffffff"></div>
<div style="position:absolute;left:108.50px;top:286.05px;width:40.00px;height:12.75px;background:#ffffff"></div>
<div style="position:absolute;left:148.50px;top:286.05px;width:40.00px;height:12.75px;background:#ffffff"></div>
<div style="position:absolute;left:188.50px;top:286.05px;width:42.70px;height:12.75px;background:#ffffff"></div>
<div style="position:absolute;left:233.60px;top:286.05px;width:38.50px;height:12.75px;background:#ffffff"></div>
<div style="position:absolute;left:272.10px;top:286.05px;width:38.30px;height:12.75px;background:#ffffff"></div>
<div style="position:absolute;left:310.40px;top:286.05px;width:37.80px;height:12.75px;background:#ffffff"></div>
<div style="position:absolute;left:348.20px;top:286.05px;width:38.20px;height:12.75px;background:#ffffff"></div>
<div style="position:absolute;left:386.40px;top:286.05px;width:38.10px;height:12.75px;background:#ffffff"></div>
<div style="position:absolute;left:424.50px;top:286.05px;width:38.80px;height:12.75px;background:#ffffff"></div>
<div style="position:absolute;left:463.30px;top:286.05px;width:43.00px;height:12.75px;background:#ffffff"></div>
<div style="position:absolute;left:-2.00px;top:298.80px;width:29.60px;height:12.75px;background:#ffffff"></div>
<div style="position:absolute;left:27.60px;top:298.80px;width:40.60px;height:12.75px;background:#ffffff"></div>
<div style="position:absolute;left:68.20px;top:298.80px;width:40.30px;height:12.75px;background:#ffffff"></div>
<div style="position:absolute;left:108.50px;top:298.80px;width:40.00px;height:12.75px;background:#ffffff"></div>
<div style="position:absolute;left:148.50px;top:298.80px;width:40.00px;height:12.75px;background:#ffffff"></div>
<div style="position:absolute;left:188.50px;top:298.80px;width:42.70px;height:12.75px;background:#ffffff"></div>
<div style="position:absolute;left:233.60px;top:298.80px;width:38.50px;height:12.75px;background:#ffffff"></div>
<div style="position:absolute;left:272.10px;top:298.80px;width:38.30px;height:12.75px;background:#ffffff"></div>
<div style="position:absolute;left:310.40px;top:298.80px;width:37.80px;height:12.75px;background:#ffffff"></div>
<div style="position:absolute;left:348.20px;top:298.80px;width:38.20px;height:12.75px;background:#ffffff"></div>
<div style="position:absolute;left:386.40px;top:298.80px;width:38.10px;height:12.75px;background:#ffffff"></div>
<div style="position:absolute;left:424.50px;top:298.80px;width:38.80px;height:12.75px;background:#ffffff"></div>
<div style="position:absolute;left:463.30px;top:298.80px;width:43.00px;height:12.75px;background:#ffffff"></div>
<div style="position:absolute;left:-2.00px;top:311.55px;width:29.60px;height:7.85px;background:#ffffff"></div>
<div style="position:absolute;left:27.60px;top:311.55px;width:40.60px;height:7.85px;background:#ffffff"></div>
<div style="position:absolute;left:68.20px;top:311.55px;width:40.30px;height:7.85px;background:#ffffff"></div>
<div style="position:absolute;left:108.50px;top:311.55px;width:40.00px;height:7.85px;background:#ffffff"></div>
<div style="position:absolute;left:148.50px;top:311.55px;width:40.00px;height:7.85px;background:#ffffff"></div>
<div style="position:absolute;left:188.50px;top:311.55px;width:42.70px;height:7.85px;background:#ffffff"></div>
<div style="position:absolute;left:233.60px;top:311.55px;width:38.50px;height:7.85px;background:#ffffff"></div>
<div style="position:absolute;left:272.10px;top:311.55px;width:38.30px;height:7.85px;background:#ffffff"></div>
<div style="position:absolute;left:310.40px;top:311.55px;width:37.80px;height:7.85px;background:#ffffff"></div>
<div style="position:absolute;left:348.20px;top:311.55px;width:38.20px;height:7.85px;background:#ffffff"></div>
<div style="position:absolute;left:386.40px;top:311.55px;width:38.10px;height:7.85px;background:#ffffff"></div>
<div style="position:absolute;left:424.50px;top:311.55px;width:38.80px;height:7.85px;background:#ffffff"></div>
<div style="position:absolute;left:463.30px;top:311.55px;width:43.00px;height:7.85px;background:#ffffff"></div>
<div style="position:absolute;left:-2.00px;top:209.05px;width:233.20px;height:1.00px;background:rgba(200,208,222,0.75)"></div>
<div style="position:absolute;left:233.80px;top:209.05px;width:272.50px;height:1.00px;background:rgba(200,208,222,0.75)"></div>
<div style="position:absolute;left:-2.00px;top:221.80px;width:233.20px;height:1.00px;background:rgba(200,208,222,0.75)"></div>
<div style="position:absolute;left:233.80px;top:221.80px;width:272.50px;height:1.00px;background:rgba(200,208,222,0.75)"></div>
<div style="position:absolute;left:-2.00px;top:234.55px;width:233.20px;height:1.00px;background:rgba(200,208,222,0.75)"></div>
<div style="position:absolute;left:233.80px;top:234.55px;width:272.50px;height:1.00px;background:rgba(200,208,222,0.75)"></div>
<div style="position:absolute;left:-2.00px;top:247.30px;width:233.20px;height:1.00px;background:rgba(200,208,222,0.75)"></div>
<div style="position:absolute;left:233.80px;top:247.30px;width:272.50px;height:1.00px;background:rgba(200,208,222,0.75)"></div>
<div style="position:absolute;left:-2.00px;top:260.05px;width:233.20px;height:1.00px;background:rgba(200,208,222,0.75)"></div>
<div style="position:absolute;left:233.80px;top:260.05px;width:272.50px;height:1.00px;background:rgba(200,208,222,0.75)"></div>
<div style="position:absolute;left:-2.00px;top:272.80px;width:233.20px;height:1.00px;background:rgba(200,208,222,0.75)"></div>
<div style="position:absolute;left:233.80px;top:272.80px;width:272.50px;height:1.00px;background:rgba(200,208,222,0.75)"></div>
<div style="position:absolute;left:-2.00px;top:285.55px;width:233.20px;height:1.00px;background:rgba(200,208,222,0.75)"></div>
<div style="position:absolute;left:233.80px;top:285.55px;width:272.50px;height:1.00px;background:rgba(200,208,222,0.75)"></div>
<div style="position:absolute;left:-2.00px;top:298.30px;width:233.20px;height:1.00px;background:rgba(200,208,222,0.75)"></div>
<div style="position:absolute;left:233.80px;top:298.30px;width:272.50px;height:1.00px;background:rgba(200,208,222,0.75)"></div>
<div style="position:absolute;left:-2.00px;top:311.05px;width:233.20px;height:1.00px;background:rgba(200,208,222,0.75)"></div>
<div style="position:absolute;left:233.80px;top:311.05px;width:272.50px;height:1.00px;background:rgba(200,208,222,0.75)"></div>
<div style="position:absolute;left:27.10px;top:196.80px;width:1.00px;height:122.60px;background:rgba(200,208,222,0.75)"></div>
<div style="position:absolute;left:67.70px;top:196.80px;width:1.00px;height:122.60px;background:rgba(200,208,222,0.75)"></div>
<div style="position:absolute;left:108.00px;top:196.80px;width:1.00px;height:122.60px;background:rgba(200,208,222,0.75)"></div>
<div style="position:absolute;left:148.00px;top:196.80px;width:1.00px;height:122.60px;background:rgba(200,208,222,0.75)"></div>
<div style="position:absolute;left:188.00px;top:196.80px;width:1.00px;height:122.60px;background:rgba(200,208,222,0.75)"></div>
<div style="position:absolute;left:271.60px;top:196.80px;width:1.00px;height:122.60px;background:rgba(200,208,222,0.75)"></div>
<div style="position:absolute;left:309.90px;top:196.80px;width:1.00px;height:122.60px;background:rgba(200,208,222,0.75)"></div>
<div style="position:absolute;left:347.70px;top:196.80px;width:1.00px;height:122.60px;background:rgba(200,208,222,0.75)"></div>
<div style="position:absolute;left:385.90px;top:196.80px;width:1.00px;height:122.60px;background:rgba(200,208,222,0.75)"></div>
<div style="position:absolute;left:424.00px;top:196.80px;width:1.00px;height:122.60px;background:rgba(200,208,222,0.75)"></div>
<div style="position:absolute;left:462.80px;top:196.80px;width:1.00px;height:122.60px;background:rgba(200,208,222,0.75)"></div>
<div style="position:absolute;left:506.30px;top:182.50px;width:0.80px;height:136.90px;background:rgba(200,208,222,0.8)"></div>
<div style="position:absolute;left:-2px;top:196.80px;width:520px;height:122.60px;overflow:hidden">
<div class="t" style="left:-272.90px;top:27.27px;width:300.00px;height:12.00px;line-height:12.00px;text-align:right;font-size:8.2px;color:#242830;">0.13</div>
<div class="t" style="left:-232.30px;top:27.27px;width:300.00px;height:12.00px;line-height:12.00px;text-align:right;font-size:8.2px;color:#242830;">-0.06</div>
<div class="t" style="left:-272.90px;top:78.28px;width:300.00px;height:12.00px;line-height:12.00px;text-align:right;font-size:8.2px;color:#242830;">0.14</div>
<div class="t" style="left:-232.30px;top:78.28px;width:300.00px;height:12.00px;line-height:12.00px;text-align:right;font-size:8.2px;color:#242830;">-0.05</div>
<div class="t" style="left:-272.90px;top:103.78px;width:300.00px;height:12.00px;line-height:12.00px;text-align:right;font-size:8.2px;color:#242830;">0.14</div>
<div class="t" style="left:-232.30px;top:103.78px;width:300.00px;height:12.00px;line-height:12.00px;text-align:right;font-size:8.2px;color:#242830;">-0.05</div>
<div class="t" style="left:-272.90px;top:116.53px;width:300.00px;height:12.00px;line-height:12.00px;text-align:right;font-size:8.2px;color:#242830;">0.15</div>
<div class="t" style="left:-232.30px;top:116.53px;width:300.00px;height:12.00px;line-height:12.00px;text-align:right;font-size:8.2px;color:#242830;">-0.05</div>
<div class="t" style="left:-28.40px;top:27.27px;width:300.00px;height:12.00px;line-height:12.00px;text-align:right;font-size:8.2px;color:#242830;color:#2e9a32;">0.10</div>
<div class="t" style="left:9.90px;top:27.27px;width:300.00px;height:12.00px;line-height:12.00px;text-align:right;font-size:8.2px;color:#242830;">0.13</div>
<div class="t" style="left:47.70px;top:27.27px;width:300.00px;height:12.00px;line-height:12.00px;text-align:right;font-size:8.2px;color:#242830;">-0.05</div>
<div class="t" style="left:-28.40px;top:78.28px;width:300.00px;height:12.00px;line-height:12.00px;text-align:right;font-size:8.2px;color:#242830;color:#e8323c;">0.10</div>
<div class="t" style="left:9.90px;top:78.28px;width:300.00px;height:12.00px;line-height:12.00px;text-align:right;font-size:8.2px;color:#242830;">0.14</div>
<div class="t" style="left:47.70px;top:78.28px;width:300.00px;height:12.00px;line-height:12.00px;text-align:right;font-size:8.2px;color:#242830;">-0.05</div>
<div class="t" style="left:-28.40px;top:103.78px;width:300.00px;height:12.00px;line-height:12.00px;text-align:right;font-size:8.2px;color:#242830;color:#e8323c;">0.10</div>
<div class="t" style="left:9.90px;top:103.78px;width:300.00px;height:12.00px;line-height:12.00px;text-align:right;font-size:8.2px;color:#242830;">0.14</div>
<div class="t" style="left:47.70px;top:103.78px;width:300.00px;height:12.00px;line-height:12.00px;text-align:right;font-size:8.2px;color:#242830;">-0.05</div>
<div class="t" style="left:-28.40px;top:116.53px;width:300.00px;height:12.00px;line-height:12.00px;text-align:right;font-size:8.2px;color:#242830;">0.10</div>
<div class="t" style="left:9.90px;top:116.53px;width:300.00px;height:12.00px;line-height:12.00px;text-align:right;font-size:8.2px;color:#242830;">0.15</div>
<div class="t" style="left:47.70px;top:116.53px;width:300.00px;height:12.00px;line-height:12.00px;text-align:right;font-size:8.2px;color:#242830;">-0.05</div>
</div>
<div style="position:absolute;left:507.10px;top:196.80px;width:10.30px;height:122.60px;background:#d9dee8"></div>
<div class="t" style="left:-28.00px;top:169.60px;width:200.00px;height:12.00px;line-height:12.00px;text-align:center;font-size:8.8px;font-weight:bold;color:#222">02 dic. 25 (11)</div>
<div class="t" style="left:-75.60px;top:169.60px;width:300.00px;height:12.00px;line-height:12.00px;text-align:right;font-size:8.8px;font-weight:bold;color:#222">21.93%</div>
<div class="t" style="left:238.60px;top:169.60px;width:300.00px;height:12.00px;line-height:12.00px;text-align:left;font-size:8.8px;font-weight:bold;color:#222">Weekly</div>
<div class="t" style="left:273.00px;top:169.60px;width:200.00px;height:12.00px;line-height:12.00px;text-align:center;font-size:8.8px;font-weight:bold;color:#222">03 dic. 25 (12)</div>
<div class="t" style="left:212.00px;top:169.60px;width:300.00px;height:12.00px;line-height:12.00px;text-align:right;font-size:8.8px;font-weight:bold;color:#222">28.40%</div>
<svg style="position:absolute;left:508px;top:199.5px" width="8" height="5"><path d="M0.5 4 L3.8 0.8 L7 4 Z" fill="#4a5468"/></svg>
<div style="position:absolute;left:508.30px;top:225.00px;width:6.80px;height:11.00px;background:#a9b3c3"></div>
<svg style="position:absolute;left:508px;top:311px" width="8" height="5"><path d="M0.5 0.8 L3.8 4 L7 0.8 Z" fill="#4a5468"/></svg>
<svg style="position:absolute;left:204.0px;top:321.3px" width="13" height="4"><g stroke="#a3abbb" stroke-width="0.6" fill="none"><path d="M0.2 0.3 L2.6 3.2 M2.6 0.3 L0.2 3.2"/><path d="M3.2 0.3 L5.6 3.2 M5.6 0.3 L3.2 3.2"/><path d="M6.2 0.3 L8.6 3.2 M8.6 0.3 L6.2 3.2"/><path d="M9.2 0.3 L11.6 3.2 M11.6 0.3 L9.2 3.2"/></g></svg>
<div style="position:absolute;left:-2.00px;top:327.20px;width:235.10px;height:279.20px;background:#fff"></div>
<div style="position:absolute;left:231.20px;top:327.20px;width:2.60px;height:279.20px;background:#b6bfcd"></div>
<div style="position:absolute;left:233.10px;top:327.20px;width:284.30px;height:279.20px;background:#fff"></div>
<div style="position:absolute;left:517.40px;top:327.20px;width:1.00px;height:279.20px;background:#b6bfcd"></div>
<div style="position:absolute;left:-2.00px;top:327.20px;width:233.20px;height:14.30px;background:#f1f5fb;border-bottom:1px solid #d0d7e2;box-sizing:border-box"></div>
<div style="position:absolute;left:233.80px;top:327.20px;width:283.60px;height:14.30px;background:#f1f5fb;border-bottom:1px solid #d0d7e2;box-sizing:border-box"></div>
<div class="t" style="left:-22.80px;top:328.65px;width:60.40px;height:12.00px;line-height:12.00px;text-align:center;font-size:8.2px;color:#242830;color:#3a3a4a">Delta</div>
<div class="t" style="left:17.60px;top:328.65px;width:60.60px;height:12.00px;line-height:12.00px;text-align:center;font-size:8.2px;color:#242830;color:#3a3a4a">Theta</div>
<div class="t" style="left:58.20px;top:328.65px;width:60.30px;height:12.00px;line-height:12.00px;text-align:center;font-size:8.2px;color:#242830;color:#3a3a4a">OrigPrice</div>
<div class="t" style="left:98.50px;top:328.65px;width:60.00px;height:12.00px;line-height:12.00px;text-align:center;font-size:8.2px;color:#242830;color:#3a3a4a">IVChg</div>
<div class="t" style="left:138.50px;top:328.65px;width:60.00px;height:12.00px;line-height:12.00px;text-align:center;font-size:8.2px;color:#242830;color:#3a3a4a">Model</div>
<div class="t" style="left:178.50px;top:328.65px;width:62.70px;height:12.00px;line-height:12.00px;text-align:center;font-size:8.2px;color:#242830;color:#3a3a4a">Pos</div>
<div class="t" style="left:223.60px;top:328.65px;width:58.50px;height:12.00px;line-height:12.00px;text-align:center;font-size:8.2px;color:#242830;color:#3a3a4a">Mid</div>
<div class="t" style="left:262.10px;top:328.65px;width:58.30px;height:12.00px;line-height:12.00px;text-align:center;font-size:8.2px;color:#242830;color:#3a3a4a">Delta</div>
<div class="t" style="left:300.40px;top:328.65px;width:57.80px;height:12.00px;line-height:12.00px;text-align:center;font-size:8.2px;color:#242830;color:#3a3a4a">Theta</div>
<div class="t" style="left:338.20px;top:328.65px;width:58.20px;height:12.00px;line-height:12.00px;text-align:center;font-size:8.2px;color:#242830;color:#3a3a4a">OrigPrice</div>
<div class="t" style="left:376.40px;top:328.65px;width:58.10px;height:12.00px;line-height:12.00px;text-align:center;font-size:8.2px;color:#242830;color:#3a3a4a">IVChg</div>
<div class="t" style="left:414.50px;top:328.65px;width:58.80px;height:12.00px;line-height:12.00px;text-align:center;font-size:8.2px;color:#242830;color:#3a3a4a">Model</div>
<div class="t" style="left:453.30px;top:328.65px;width:63.00px;height:12.00px;line-height:12.00px;text-align:center;font-size:8.2px;color:#242830;color:#3a3a4a">Pos</div>
<div style="position:absolute;left:27.60px;top:327.20px;width:1.00px;height:14.30px;background:#dde3ec"></div>
<div style="position:absolute;left:68.20px;top:327.20px;width:1.00px;height:14.30px;background:#dde3ec"></div>
<div style="position:absolute;left:108.50px;top:327.20px;width:1.00px;height:14.30px;background:#dde3ec"></div>
<div style="position:absolute;left:148.50px;top:327.20px;width:1.00px;height:14.30px;background:#dde3ec"></div>
<div style="position:absolute;left:188.50px;top:327.20px;width:1.00px;height:14.30px;background:#dde3ec"></div>
<div style="position:absolute;left:272.10px;top:327.20px;width:1.00px;height:14.30px;background:#dde3ec"></div>
<div style="position:absolute;left:310.40px;top:327.20px;width:1.00px;height:14.30px;background:#dde3ec"></div>
<div style="position:absolute;left:348.20px;top:327.20px;width:1.00px;height:14.30px;background:#dde3ec"></div>
<div style="position:absolute;left:386.40px;top:327.20px;width:1.00px;height:14.30px;background:#dde3ec"></div>
<div style="position:absolute;left:424.50px;top:327.20px;width:1.00px;height:14.30px;background:#dde3ec"></div>
<div style="position:absolute;left:463.30px;top:327.20px;width:1.00px;height:14.30px;background:#dde3ec"></div>
<div style="position:absolute;left:506.30px;top:327.20px;width:1.00px;height:14.30px;background:#dde3ec"></div>
<div style="position:absolute;left:-2.00px;top:341.50px;width:29.60px;height:12.75px;background:#a9c1e0"></div>
<div style="position:absolute;left:27.60px;top:341.50px;width:40.60px;height:12.75px;background:#a9c1e0"></div>
<div style="position:absolute;left:68.20px;top:341.50px;width:40.30px;height:12.75px;background:#a9c1e0"></div>
<div style="position:absolute;left:108.50px;top:341.50px;width:40.00px;height:12.75px;background:#a9c1e0"></div>
<div style="position:absolute;left:148.50px;top:341.50px;width:40.00px;height:12.75px;background:#a9c1e0"></div>
<div style="position:absolute;left:188.50px;top:341.50px;width:42.70px;height:12.75px;background:#a9c1e0"></div>
<div style="position:absolute;left:233.60px;top:341.50px;width:38.50px;height:12.75px;background:#a9c1e0"></div>
<div style="position:absolute;left:272.10px;top:341.50px;width:38.30px;height:12.75px;background:#a9c1e0"></div>
<div style="position:absolute;left:310.40px;top:341.50px;width:37.80px;height:12.75px;background:#a9c1e0"></div>
<div style="position:absolute;left:348.20px;top:341.50px;width:38.20px;height:12.75px;background:#a9c1e0"></div>
<div style="position:absolute;left:386.40px;top:341.50px;width:38.10px;height:12.75px;background:#a9c1e0"></div>
<div style="position:absolute;left:424.50px;top:341.50px;width:38.80px;height:12.75px;background:#a9c1e0"></div>
<div style="position:absolute;left:463.30px;top:341.50px;width:43.00px;height:12.75px;background:#a9c1e0"></div>
<div style="position:absolute;left:-2.00px;top:354.25px;width:29.60px;height:12.75px;background:#a9c1e0"></div>
<div style="position:absolute;left:27.60px;top:354.25px;width:40.60px;height:12.75px;background:#a9c1e0"></div>
<div style="position:absolute;left:68.20px;top:354.25px;width:40.30px;height:12.75px;background:#a9c1e0"></div>
<div style="position:absolute;left:108.50px;top:354.25px;width:40.00px;height:12.75px;background:#a9c1e0"></div>
<div style="position:absolute;left:148.50px;top:354.25px;width:40.00px;height:12.75px;background:#a9c1e0"></div>
<div style="position:absolute;left:188.50px;top:354.25px;width:42.70px;height:12.75px;background:#a9c1e0"></div>
<div style="position:absolute;left:233.60px;top:354.25px;width:38.50px;height:12.75px;background:#a9c1e0"></div>
<div style="position:absolute;left:272.10px;top:354.25px;width:38.30px;height:12.75px;background:#a9c1e0"></div>
<div style="position:absolute;left:310.40px;top:354.25px;width:37.80px;height:12.75px;background:#a9c1e0"></div>
<div style="position:absolute;left:348.20px;top:354.25px;width:38.20px;height:12.75px;background:#a9c1e0"></div>
<div style="position:absolute;left:386.40px;top:354.25px;width:38.10px;height:12.75px;background:#a9c1e0"></div>
<div style="position:absolute;left:424.50px;top:354.25px;width:38.80px;height:12.75px;background:#a9c1e0"></div>
<div style="position:absolute;left:463.30px;top:354.25px;width:43.00px;height:12.75px;background:#a9c1e0"></div>
<div style="position:absolute;left:-2.00px;top:367.00px;width:29.60px;height:12.75px;background:#a9c1e0"></div>
<div style="position:absolute;left:27.60px;top:367.00px;width:40.60px;height:12.75px;background:#a9c1e0"></div>
<div style="position:absolute;left:68.20px;top:367.00px;width:40.30px;height:12.75px;background:#a9c1e0"></div>
<div style="position:absolute;left:108.50px;top:367.00px;width:40.00px;height:12.75px;background:#a9c1e0"></div>
<div style="position:absolute;left:148.50px;top:367.00px;width:40.00px;height:12.75px;background:#a9c1e0"></div>
<div style="position:absolute;left:188.50px;top:367.00px;width:42.70px;height:12.75px;background:#a9c1e0"></div>
<div style="position:absolute;left:233.60px;top:367.00px;width:38.50px;height:12.75px;background:#a9c1e0"></div>
<div style="position:absolute;left:272.10px;top:367.00px;width:38.30px;height:12.75px;background:#a9c1e0"></div>
<div style="position:absolute;left:310.40px;top:367.00px;width:37.80px;height:12.75px;background:#a9c1e0"></div>
<div style="position:absolute;left:348.20px;top:367.00px;width:38.20px;height:12.75px;background:#a9c1e0"></div>
<div style="position:absolute;left:386.40px;top:367.00px;width:38.10px;height:12.75px;background:#a9c1e0"></div>
<div style="position:absolute;left:424.50px;top:367.00px;width:38.80px;height:12.75px;background:#a9c1e0"></div>
<div style="position:absolute;left:463.30px;top:367.00px;width:43.00px;height:12.75px;background:#a9c1e0"></div>
<div style="position:absolute;left:-2.00px;top:379.75px;width:29.60px;height:12.75px;background:#a9c1e0"></div>
<div style="position:absolute;left:27.60px;top:379.75px;width:40.60px;height:12.75px;background:#a9c1e0"></div>
<div style="position:absolute;left:68.20px;top:379.75px;width:40.30px;height:12.75px;background:#a9c1e0"></div>
<div style="position:absolute;left:108.50px;top:379.75px;width:40.00px;height:12.75px;background:#a9c1e0"></div>
<div style="position:absolute;left:148.50px;top:379.75px;width:40.00px;height:12.75px;background:#a9c1e0"></div>
<div style="position:absolute;left:188.50px;top:379.75px;width:42.70px;height:12.75px;background:#a9c1e0"></div>
<div style="position:absolute;left:233.60px;top:379.75px;width:38.50px;height:12.75px;background:#a9c1e0"></div>
<div style="position:absolute;left:272.10px;top:379.75px;width:38.30px;height:12.75px;background:#a9c1e0"></div>
<div style="position:absolute;left:310.40px;top:379.75px;width:37.80px;height:12.75px;background:#a9c1e0"></div>
<div style="position:absolute;left:348.20px;top:379.75px;width:38.20px;height:12.75px;background:#a9c1e0"></div>
<div style="position:absolute;left:386.40px;top:379.75px;width:38.10px;height:12.75px;background:#a9c1e0"></div>
<div style="position:absolute;left:424.50px;top:379.75px;width:38.80px;height:12.75px;background:#a9c1e0"></div>
<div style="position:absolute;left:463.30px;top:379.75px;width:43.00px;height:12.75px;background:#a9c1e0"></div>
<div style="position:absolute;left:-2.00px;top:392.50px;width:29.60px;height:12.75px;background:#a9c1e0"></div>
<div style="position:absolute;left:27.60px;top:392.50px;width:40.60px;height:12.75px;background:#a9c1e0"></div>
<div style="position:absolute;left:68.20px;top:392.50px;width:40.30px;height:12.75px;background:#a9c1e0"></div>
<div style="position:absolute;left:108.50px;top:392.50px;width:40.00px;height:12.75px;background:#a9c1e0"></div>
<div style="position:absolute;left:148.50px;top:392.50px;width:40.00px;height:12.75px;background:#a9c1e0"></div>
<div style="position:absolute;left:188.50px;top:392.50px;width:42.70px;height:12.75px;background:#a9c1e0"></div>
<div style="position:absolute;left:233.60px;top:392.50px;width:38.50px;height:12.75px;background:#a9c1e0"></div>
<div style="position:absolute;left:272.10px;top:392.50px;width:38.30px;height:12.75px;background:#a9c1e0"></div>
<div style="position:absolute;left:310.40px;top:392.50px;width:37.80px;height:12.75px;background:#a9c1e0"></div>
<div style="position:absolute;left:348.20px;top:392.50px;width:38.20px;height:12.75px;background:#a9c1e0"></div>
<div style="position:absolute;left:386.40px;top:392.50px;width:38.10px;height:12.75px;background:#a9c1e0"></div>
<div style="position:absolute;left:424.50px;top:392.50px;width:38.80px;height:12.75px;background:#a9c1e0"></div>
<div style="position:absolute;left:463.30px;top:392.50px;width:43.00px;height:12.75px;background:#a9c1e0"></div>
<div style="position:absolute;left:-2.00px;top:405.25px;width:29.60px;height:12.75px;background:#a9c1e0"></div>
<div style="position:absolute;left:27.60px;top:405.25px;width:40.60px;height:12.75px;background:#a9c1e0"></div>
<div style="position:absolute;left:68.20px;top:405.25px;width:40.30px;height:12.75px;background:#a9c1e0"></div>
<div style="position:absolute;left:108.50px;top:405.25px;width:40.00px;height:12.75px;background:#a9c1e0"></div>
<div style="position:absolute;left:148.50px;top:405.25px;width:40.00px;height:12.75px;background:#a9c1e0"></div>
<div style="position:absolute;left:188.50px;top:405.25px;width:42.70px;height:12.75px;background:#a9c1e0"></div>
<div style="position:absolute;left:233.60px;top:405.25px;width:38.50px;height:12.75px;background:#a9c1e0"></div>
<div style="position:absolute;left:272.10px;top:405.25px;width:38.30px;height:12.75px;background:#a9c1e0"></div>
<div style="position:absolute;left:310.40px;top:405.25px;width:37.80px;height:12.75px;background:#a9c1e0"></div>
<div style="position:absolute;left:348.20px;top:405.25px;width:38.20px;height:12.75px;background:#a9c1e0"></div>
<div style="position:absolute;left:386.40px;top:405.25px;width:38.10px;height:12.75px;background:#a9c1e0"></div>
<div style="position:absolute;left:424.50px;top:405.25px;width:38.80px;height:12.75px;background:#a9c1e0"></div>
<div style="position:absolute;left:463.30px;top:405.25px;width:43.00px;height:12.75px;background:#a9c1e0"></div>
<div style="position:absolute;left:-2.00px;top:418.00px;width:29.60px;height:12.75px;background:#a9c1e0"></div>
<div style="position:absolute;left:27.60px;top:418.00px;width:40.60px;height:12.75px;background:#a9c1e0"></div>
<div style="position:absolute;left:68.20px;top:418.00px;width:40.30px;height:12.75px;background:#a9c1e0"></div>
<div style="position:absolute;left:108.50px;top:418.00px;width:40.00px;height:12.75px;background:#a9c1e0"></div>
<div style="position:absolute;left:148.50px;top:418.00px;width:40.00px;height:12.75px;background:#a9c1e0"></div>
<div style="position:absolute;left:188.50px;top:418.00px;width:42.70px;height:12.75px;background:#a9c1e0"></div>
<div style="position:absolute;left:233.60px;top:418.00px;width:38.50px;height:12.75px;background:#a9c1e0"></div>
<div style="position:absolute;left:272.10px;top:418.00px;width:38.30px;height:12.75px;background:#a9c1e0"></div>
<div style="position:absolute;left:310.40px;top:418.00px;width:37.80px;height:12.75px;background:#a9c1e0"></div>
<div style="position:absolute;left:348.20px;top:418.00px;width:38.20px;height:12.75px;background:#a9c1e0"></div>
<div style="position:absolute;left:386.40px;top:418.00px;width:38.10px;height:12.75px;background:#a9c1e0"></div>
<div style="position:absolute;left:424.50px;top:418.00px;width:38.80px;height:12.75px;background:#a9c1e0"></div>
<div style="position:absolute;left:463.30px;top:418.00px;width:43.00px;height:12.75px;background:#a9c1e0"></div>
<div style="position:absolute;left:-2.00px;top:430.75px;width:29.60px;height:12.75px;background:#a9c1e0"></div>
<div style="position:absolute;left:27.60px;top:430.75px;width:40.60px;height:12.75px;background:#a9c1e0"></div>
<div style="position:absolute;left:68.20px;top:430.75px;width:40.30px;height:12.75px;background:#a9c1e0"></div>
<div style="position:absolute;left:108.50px;top:430.75px;width:40.00px;height:12.75px;background:#a9c1e0"></div>
<div style="position:absolute;left:148.50px;top:430.75px;width:40.00px;height:12.75px;background:#a9c1e0"></div>
<div style="position:absolute;left:188.50px;top:430.75px;width:42.70px;height:12.75px;background:#a9c1e0"></div>
<div style="position:absolute;left:233.60px;top:430.75px;width:38.50px;height:12.75px;background:#a9c1e0"></div>
<div style="position:absolute;left:272.10px;top:430.75px;width:38.30px;height:12.75px;background:#a9c1e0"></div>
<div style="position:absolute;left:310.40px;top:430.75px;width:37.80px;height:12.75px;background:#a9c1e0"></div>
<div style="position:absolute;left:348.20px;top:430.75px;width:38.20px;height:12.75px;background:#a9c1e0"></div>
<div style="position:absolute;left:386.40px;top:430.75px;width:38.10px;height:12.75px;background:#a9c1e0"></div>
<div style="position:absolute;left:424.50px;top:430.75px;width:38.80px;height:12.75px;background:#a9c1e0"></div>
<div style="position:absolute;left:463.30px;top:430.75px;width:43.00px;height:12.75px;background:#a9c1e0"></div>
<div style="position:absolute;left:-2.00px;top:443.50px;width:29.60px;height:12.75px;background:#a9c1e0"></div>
<div style="position:absolute;left:27.60px;top:443.50px;width:40.60px;height:12.75px;background:#a9c1e0"></div>
<div style="position:absolute;left:68.20px;top:443.50px;width:40.30px;height:12.75px;background:#a9c1e0"></div>
<div style="position:absolute;left:108.50px;top:443.50px;width:40.00px;height:12.75px;background:#a9c1e0"></div>
<div style="position:absolute;left:148.50px;top:443.50px;width:40.00px;height:12.75px;background:#a9c1e0"></div>
<div style="position:absolute;left:188.50px;top:443.50px;width:42.70px;height:12.75px;background:#a9c1e0"></div>
<div style="position:absolute;left:233.60px;top:443.50px;width:38.50px;height:12.75px;background:#a9c1e0"></div>
<div style="position:absolute;left:272.10px;top:443.50px;width:38.30px;height:12.75px;background:#a9c1e0"></div>
<div style="position:absolute;left:310.40px;top:443.50px;width:37.80px;height:12.75px;background:#a9c1e0"></div>
<div style="position:absolute;left:348.20px;top:443.50px;width:38.20px;height:12.75px;background:#a9c1e0"></div>
<div style="position:absolute;left:386.40px;top:443.50px;width:38.10px;height:12.75px;background:#a9c1e0"></div>
<div style="position:absolute;left:424.50px;top:443.50px;width:38.80px;height:12.75px;background:#a9c1e0"></div>
<div style="position:absolute;left:463.30px;top:443.50px;width:43.00px;height:12.75px;background:#a9c1e0"></div>
<div style="position:absolute;left:-2.00px;top:456.25px;width:29.60px;height:12.75px;background:#a9c1e0"></div>
<div style="position:absolute;left:27.60px;top:456.25px;width:40.60px;height:12.75px;background:#a9c1e0"></div>
<div style="position:absolute;left:68.20px;top:456.25px;width:40.30px;height:12.75px;background:#a9c1e0"></div>
<div style="position:absolute;left:108.50px;top:456.25px;width:40.00px;height:12.75px;background:#a9c1e0"></div>
<div style="position:absolute;left:148.50px;top:456.25px;width:40.00px;height:12.75px;background:#a9c1e0"></div>
<div style="position:absolute;left:188.50px;top:456.25px;width:42.70px;height:12.75px;background:#a9c1e0"></div>
<div style="position:absolute;left:233.60px;top:456.25px;width:38.50px;height:12.75px;background:#a9c1e0"></div>
<div style="position:absolute;left:272.10px;top:456.25px;width:38.30px;height:12.75px;background:#a9c1e0"></div>
<div style="position:absolute;left:310.40px;top:456.25px;width:37.80px;height:12.75px;background:#a9c1e0"></div>
<div style="position:absolute;left:348.20px;top:456.25px;width:38.20px;height:12.75px;background:#a9c1e0"></div>
<div style="position:absolute;left:386.40px;top:456.25px;width:38.10px;height:12.75px;background:#a9c1e0"></div>
<div style="position:absolute;left:424.50px;top:456.25px;width:38.80px;height:12.75px;background:#a9c1e0"></div>
<div style="position:absolute;left:463.30px;top:456.25px;width:43.00px;height:12.75px;background:#a9c1e0"></div>
<div style="position:absolute;left:-2.00px;top:469.00px;width:29.60px;height:12.75px;background:#a9c1e0"></div>
<div style="position:absolute;left:27.60px;top:469.00px;width:40.60px;height:12.75px;background:#a9c1e0"></div>
<div style="position:absolute;left:68.20px;top:469.00px;width:40.30px;height:12.75px;background:#a9c1e0"></div>
<div style="position:absolute;left:108.50px;top:469.00px;width:40.00px;height:12.75px;background:#a9c1e0"></div>
<div style="position:absolute;left:148.50px;top:469.00px;width:40.00px;height:12.75px;background:#a9c1e0"></div>
<div style="position:absolute;left:188.50px;top:469.00px;width:42.70px;height:12.75px;background:#a9c1e0"></div>
<div style="position:absolute;left:233.60px;top:469.00px;width:38.50px;height:12.75px;background:#a9c1e0"></div>
<div style="position:absolute;left:272.10px;top:469.00px;width:38.30px;height:12.75px;background:#a9c1e0"></div>
<div style="position:absolute;left:310.40px;top:469.00px;width:37.80px;height:12.75px;background:#a9c1e0"></div>
<div style="position:absolute;left:348.20px;top:469.00px;width:38.20px;height:12.75px;background:#a9c1e0"></div>
<div style="position:absolute;left:386.40px;top:469.00px;width:38.10px;height:12.75px;background:#a9c1e0"></div>
<div style="position:absolute;left:424.50px;top:469.00px;width:38.80px;height:12.75px;background:#a9c1e0"></div>
<div style="position:absolute;left:463.30px;top:469.00px;width:43.00px;height:12.75px;background:#a9c1e0"></div>
<div style="position:absolute;left:-2.00px;top:481.75px;width:29.60px;height:12.75px;background:#a9c1e0"></div>
<div style="position:absolute;left:27.60px;top:481.75px;width:40.60px;height:12.75px;background:#a9c1e0"></div>
<div style="position:absolute;left:68.20px;top:481.75px;width:40.30px;height:12.75px;background:#a9c1e0"></div>
<div style="position:absolute;left:108.50px;top:481.75px;width:40.00px;height:12.75px;background:#a9c1e0"></div>
<div style="position:absolute;left:148.50px;top:481.75px;width:40.00px;height:12.75px;background:#a9c1e0"></div>
<div style="position:absolute;left:188.50px;top:481.75px;width:42.70px;height:12.75px;background:#a9c1e0"></div>
<div style="position:absolute;left:233.60px;top:481.75px;width:38.50px;height:12.75px;background:#a9c1e0"></div>
<div style="position:absolute;left:272.10px;top:481.75px;width:38.30px;height:12.75px;background:#a9c1e0"></div>
<div style="position:absolute;left:310.40px;top:481.75px;width:37.80px;height:12.75px;background:#a9c1e0"></div>
<div style="position:absolute;left:348.20px;top:481.75px;width:38.20px;height:12.75px;background:#a9c1e0"></div>
<div style="position:absolute;left:386.40px;top:481.75px;width:38.10px;height:12.75px;background:#a9c1e0"></div>
<div style="position:absolute;left:424.50px;top:481.75px;width:38.80px;height:12.75px;background:#a9c1e0"></div>
<div style="position:absolute;left:463.30px;top:481.75px;width:43.00px;height:12.75px;background:#a9c1e0"></div>
<div style="position:absolute;left:-2.00px;top:494.50px;width:29.60px;height:12.75px;background:#a9c1e0"></div>
<div style="position:absolute;left:27.60px;top:494.50px;width:40.60px;height:12.75px;background:#a9c1e0"></div>
<div style="position:absolute;left:68.20px;top:494.50px;width:40.30px;height:12.75px;background:#a9c1e0"></div>
<div style="position:absolute;left:108.50px;top:494.50px;width:40.00px;height:12.75px;background:#a9c1e0"></div>
<div style="position:absolute;left:148.50px;top:494.50px;width:40.00px;height:12.75px;background:#a9c1e0"></div>
<div style="position:absolute;left:188.50px;top:494.50px;width:42.70px;height:12.75px;background:#a9c1e0"></div>
<div style="position:absolute;left:233.60px;top:494.50px;width:38.50px;height:12.75px;background:#a9c1e0"></div>
<div style="position:absolute;left:272.10px;top:494.50px;width:38.30px;height:12.75px;background:#a9c1e0"></div>
<div style="position:absolute;left:310.40px;top:494.50px;width:37.80px;height:12.75px;background:#a9c1e0"></div>
<div style="position:absolute;left:348.20px;top:494.50px;width:38.20px;height:12.75px;background:#a9c1e0"></div>
<div style="position:absolute;left:386.40px;top:494.50px;width:38.10px;height:12.75px;background:#a9c1e0"></div>
<div style="position:absolute;left:424.50px;top:494.50px;width:38.80px;height:12.75px;background:#a9c1e0"></div>
<div style="position:absolute;left:463.30px;top:494.50px;width:43.00px;height:12.75px;background:#a9c1e0"></div>
<div style="position:absolute;left:-2.00px;top:507.25px;width:29.60px;height:12.75px;background:#fffcf0"></div>
<div style="position:absolute;left:27.60px;top:507.25px;width:40.60px;height:12.75px;background:#fffcf0"></div>
<div style="position:absolute;left:68.20px;top:507.25px;width:40.30px;height:12.75px;background:#fffcf0"></div>
<div style="position:absolute;left:108.50px;top:507.25px;width:40.00px;height:12.75px;background:#fffcf0"></div>
<div style="position:absolute;left:148.50px;top:507.25px;width:40.00px;height:12.75px;background:#fffcf0"></div>
<div style="position:absolute;left:188.50px;top:507.25px;width:42.70px;height:12.75px;background:#fffcf0"></div>
<div style="position:absolute;left:233.60px;top:507.25px;width:38.50px;height:12.75px;background:#fffcf0"></div>
<div style="position:absolute;left:272.10px;top:507.25px;width:38.30px;height:12.75px;background:#fffcf0"></div>
<div style="position:absolute;left:310.40px;top:507.25px;width:37.80px;height:12.75px;background:#fffcf0"></div>
<div style="position:absolute;left:348.20px;top:507.25px;width:38.20px;height:12.75px;background:#fffcf0"></div>
<div style="position:absolute;left:386.40px;top:507.25px;width:38.10px;height:12.75px;background:#fffcf0"></div>
<div style="position:absolute;left:424.50px;top:507.25px;width:38.80px;height:12.75px;background:#fffcf0"></div>
<div style="position:absolute;left:463.30px;top:507.25px;width:43.00px;height:12.75px;background:#fffcf0"></div>
<div style="position:absolute;left:-2.00px;top:520.00px;width:29.60px;height:12.75px;background:#a9c1e0"></div>
<div style="position:absolute;left:27.60px;top:520.00px;width:40.60px;height:12.75px;background:#a9c1e0"></div>
<div style="position:absolute;left:68.20px;top:520.00px;width:40.30px;height:12.75px;background:#a9c1e0"></div>
<div style="position:absolute;left:108.50px;top:520.00px;width:40.00px;height:12.75px;background:#a9c1e0"></div>
<div style="position:absolute;left:148.50px;top:520.00px;width:40.00px;height:12.75px;background:#a9c1e0"></div>
<div style="position:absolute;left:188.50px;top:520.00px;width:42.70px;height:12.75px;background:#a9c1e0"></div>
<div style="position:absolute;left:233.60px;top:520.00px;width:38.50px;height:12.75px;background:#a9c1e0"></div>
<div style="position:absolute;left:272.10px;top:520.00px;width:38.30px;height:12.75px;background:#a9c1e0"></div>
<div style="position:absolute;left:310.40px;top:520.00px;width:37.80px;height:12.75px;background:#a9c1e0"></div>
<div style="position:absolute;left:348.20px;top:520.00px;width:38.20px;height:12.75px;background:#a9c1e0"></div>
<div style="position:absolute;left:386.40px;top:520.00px;width:38.10px;height:12.75px;background:#a9c1e0"></div>
<div style="position:absolute;left:424.50px;top:520.00px;width:38.80px;height:12.75px;background:#a9c1e0"></div>
<div style="position:absolute;left:463.30px;top:520.00px;width:43.00px;height:12.75px;background:#a9c1e0"></div>
<div style="position:absolute;left:-2.00px;top:532.75px;width:29.60px;height:12.75px;background:#c9e5ea"></div>
<div style="position:absolute;left:27.60px;top:532.75px;width:40.60px;height:12.75px;background:#c9e5ea"></div>
<div style="position:absolute;left:68.20px;top:532.75px;width:40.30px;height:12.75px;background:#c9e5ea"></div>
<div style="position:absolute;left:108.50px;top:532.75px;width:40.00px;height:12.75px;background:#c9e5ea"></div>
<div style="position:absolute;left:148.50px;top:532.75px;width:40.00px;height:12.75px;background:#c9e5ea"></div>
<div style="position:absolute;left:188.50px;top:532.75px;width:42.70px;height:12.75px;background:#c9e5ea"></div>
<div style="position:absolute;left:233.60px;top:532.75px;width:38.50px;height:12.75px;background:#a9c1e0"></div>
<div style="position:absolute;left:272.10px;top:532.75px;width:38.30px;height:12.75px;background:#a9c1e0"></div>
<div style="position:absolute;left:310.40px;top:532.75px;width:37.80px;height:12.75px;background:#a9c1e0"></div>
<div style="position:absolute;left:348.20px;top:532.75px;width:38.20px;height:12.75px;background:#a9c1e0"></div>
<div style="position:absolute;left:386.40px;top:532.75px;width:38.10px;height:12.75px;background:#a9c1e0"></div>
<div style="position:absolute;left:424.50px;top:532.75px;width:38.80px;height:12.75px;background:#a9c1e0"></div>
<div style="position:absolute;left:463.30px;top:532.75px;width:43.00px;height:12.75px;background:#a9c1e0"></div>
<div style="position:absolute;left:-2.00px;top:545.50px;width:29.60px;height:12.75px;background:#c9e5ea"></div>
<div style="position:absolute;left:27.60px;top:545.50px;width:40.60px;height:12.75px;background:#c9e5ea"></div>
<div style="position:absolute;left:68.20px;top:545.50px;width:40.30px;height:12.75px;background:#c9e5ea"></div>
<div style="position:absolute;left:108.50px;top:545.50px;width:40.00px;height:12.75px;background:#c9e5ea"></div>
<div style="position:absolute;left:148.50px;top:545.50px;width:40.00px;height:12.75px;background:#c9e5ea"></div>
<div style="position:absolute;left:188.50px;top:545.50px;width:42.70px;height:12.75px;background:#c9e5ea"></div>
<div style="position:absolute;left:233.60px;top:545.50px;width:38.50px;height:12.75px;background:#a9c1e0"></div>
<div style="position:absolute;left:272.10px;top:545.50px;width:38.30px;height:12.75px;background:#a9c1e0"></div>
<div style="position:absolute;left:310.40px;top:545.50px;width:37.80px;height:12.75px;background:#a9c1e0"></div>
<div style="position:absolute;left:348.20px;top:545.50px;width:38.20px;height:12.75px;background:#c9e5ea"></div>
<div style="position:absolute;left:386.40px;top:545.50px;width:38.10px;height:12.75px;background:#c9e5ea"></div>
<div style="position:absolute;left:424.50px;top:545.50px;width:38.80px;height:12.75px;background:#c9e5ea"></div>
<div style="position:absolute;left:463.30px;top:545.50px;width:43.00px;height:12.75px;background:#c9e5ea"></div>
<div style="position:absolute;left:-2.00px;top:558.25px;width:29.60px;height:12.75px;background:#c9e5ea"></div>
<div style="position:absolute;left:27.60px;top:558.25px;width:40.60px;height:12.75px;background:#c9e5ea"></div>
<div style="position:absolute;left:68.20px;top:558.25px;width:40.30px;height:12.75px;background:#c9e5ea"></div>
<div style="position:absolute;left:108.50px;top:558.25px;width:40.00px;height:12.75px;background:#c9e5ea"></div>
<div style="position:absolute;left:148.50px;top:558.25px;width:40.00px;height:12.75px;background:#c9e5ea"></div>
<div style="position:absolute;left:188.50px;top:558.25px;width:42.70px;height:12.75px;background:#c9e5ea"></div>
<div style="position:absolute;left:233.60px;top:558.25px;width:38.50px;height:12.75px;background:#a9c1e0"></div>
<div style="position:absolute;left:272.10px;top:558.25px;width:38.30px;height:12.75px;background:#a9c1e0"></div>
<div style="position:absolute;left:310.40px;top:558.25px;width:37.80px;height:12.75px;background:#a9c1e0"></div>
<div style="position:absolute;left:348.20px;top:558.25px;width:38.20px;height:12.75px;background:#c9e5ea"></div>
<div style="position:absolute;left:386.40px;top:558.25px;width:38.10px;height:12.75px;background:#c9e5ea"></div>
<div style="position:absolute;left:424.50px;top:558.25px;width:38.80px;height:12.75px;background:#c9e5ea"></div>
<div style="position:absolute;left:463.30px;top:558.25px;width:43.00px;height:12.75px;background:#c9e5ea"></div>
<div style="position:absolute;left:-2.00px;top:571.00px;width:29.60px;height:12.75px;background:#c9e5ea"></div>
<div style="position:absolute;left:27.60px;top:571.00px;width:40.60px;height:12.75px;background:#c9e5ea"></div>
<div style="position:absolute;left:68.20px;top:571.00px;width:40.30px;height:12.75px;background:#c9e5ea"></div>
<div style="position:absolute;left:108.50px;top:571.00px;width:40.00px;height:12.75px;background:#c9e5ea"></div>
<div style="position:absolute;left:148.50px;top:571.00px;width:40.00px;height:12.75px;background:#c9e5ea"></div>
<div style="position:absolute;left:188.50px;top:571.00px;width:42.70px;height:12.75px;background:#c9e5ea"></div>
<div style="position:absolute;left:233.60px;top:571.00px;width:38.50px;height:12.75px;background:#c9e5ea"></div>
<div style="position:absolute;left:272.10px;top:571.00px;width:38.30px;height:12.75px;background:#c9e5ea"></div>
<div style="position:absolute;left:310.40px;top:571.00px;width:37.80px;height:12.75px;background:#c9e5ea"></div>
<div style="position:absolute;left:348.20px;top:571.00px;width:38.20px;height:12.75px;background:#c9e5ea"></div>
<div style="position:absolute;left:386.40px;top:571.00px;width:38.10px;height:12.75px;background:#c9e5ea"></div>
<div style="position:absolute;left:424.50px;top:571.00px;width:38.80px;height:12.75px;background:#c9e5ea"></div>
<div style="position:absolute;left:463.30px;top:571.00px;width:43.00px;height:12.75px;background:#c9e5ea"></div>
<div style="position:absolute;left:-2.00px;top:583.75px;width:29.60px;height:12.75px;background:#c9e5ea"></div>
<div style="position:absolute;left:27.60px;top:583.75px;width:40.60px;height:12.75px;background:#c9e5ea"></div>
<div style="position:absolute;left:68.20px;top:583.75px;width:40.30px;height:12.75px;background:#c9e5ea"></div>
<div style="position:absolute;left:108.50px;top:583.75px;width:40.00px;height:12.75px;background:#c9e5ea"></div>
<div style="position:absolute;left:148.50px;top:583.75px;width:40.00px;height:12.75px;background:#c9e5ea"></div>
<div style="position:absolute;left:188.50px;top:583.75px;width:42.70px;height:12.75px;background:#c9e5ea"></div>
<div style="position:absolute;left:233.60px;top:583.75px;width:38.50px;height:12.75px;background:#c9e5ea"></div>
<div style="position:absolute;left:272.10px;top:583.75px;width:38.30px;height:12.75px;background:#c9e5ea"></div>
<div style="position:absolute;left:310.40px;top:583.75px;width:37.80px;height:12.75px;background:#c9e5ea"></div>
<div style="position:absolute;left:348.20px;top:583.75px;width:38.20px;height:12.75px;background:#c9e5ea"></div>
<div style="position:absolute;left:386.40px;top:583.75px;width:38.10px;height:12.75px;background:#c9e5ea"></div>
<div style="position:absolute;left:424.50px;top:583.75px;width:38.80px;height:12.75px;background:#c9e5ea"></div>
<div style="position:absolute;left:463.30px;top:583.75px;width:43.00px;height:12.75px;background:#c9e5ea"></div>
<div style="position:absolute;left:-2.00px;top:596.50px;width:29.60px;height:9.90px;background:#c9e5ea"></div>
<div style="position:absolute;left:27.60px;top:596.50px;width:40.60px;height:9.90px;background:#c9e5ea"></div>
<div style="position:absolute;left:68.20px;top:596.50px;width:40.30px;height:9.90px;background:#c9e5ea"></div>
<div style="position:absolute;left:108.50px;top:596.50px;width:40.00px;height:9.90px;background:#c9e5ea"></div>
<div style="position:absolute;left:148.50px;top:596.50px;width:40.00px;height:9.90px;background:#c9e5ea"></div>
<div style="position:absolute;left:188.50px;top:596.50px;width:42.70px;height:9.90px;background:#c9e5ea"></div>
<div style="position:absolute;left:233.60px;top:596.50px;width:38.50px;height:9.90px;background:#c9e5ea"></div>
<div style="position:absolute;left:272.10px;top:596.50px;width:38.30px;height:9.90px;background:#c9e5ea"></div>
<div style="position:absolute;left:310.40px;top:596.50px;width:37.80px;height:9.90px;background:#c9e5ea"></div>
<div style="position:absolute;left:348.20px;top:596.50px;width:38.20px;height:9.90px;background:#c9e5ea"></div>
<div style="position:absolute;left:386.40px;top:596.50px;width:38.10px;height:9.90px;background:#c9e5ea"></div>
<div style="position:absolute;left:424.50px;top:596.50px;width:38.80px;height:9.90px;background:#c9e5ea"></div>
<div style="position:absolute;left:463.30px;top:596.50px;width:43.00px;height:9.90px;background:#c9e5ea"></div>
<div style="position:absolute;left:-2.00px;top:353.75px;width:233.20px;height:1.00px;background:rgba(200,208,222,0.75)"></div>
<div style="position:absolute;left:233.80px;top:353.75px;width:272.50px;height:1.00px;background:rgba(200,208,222,0.75)"></div>
<div style="position:absolute;left:-2.00px;top:366.50px;width:233.20px;height:1.00px;background:rgba(200,208,222,0.75)"></div>
<div style="position:absolute;left:233.80px;top:366.50px;width:272.50px;height:1.00px;background:rgba(200,208,222,0.75)"></div>
<div style="position:absolute;left:-2.00px;top:379.25px;width:233.20px;height:1.00px;background:rgba(200,208,222,0.75)"></div>
<div style="position:absolute;left:233.80px;top:379.25px;width:272.50px;height:1.00px;background:rgba(200,208,222,0.75)"></div>
<div style="position:absolute;left:-2.00px;top:392.00px;width:233.20px;height:1.00px;background:rgba(200,208,222,0.75)"></div>
<div style="position:absolute;left:233.80px;top:392.00px;width:272.50px;height:1.00px;background:rgba(200,208,222,0.75)"></div>
<div style="position:absolute;left:-2.00px;top:404.75px;width:233.20px;height:1.00px;background:rgba(200,208,222,0.75)"></div>
<div style="position:absolute;left:233.80px;top:404.75px;width:272.50px;height:1.00px;background:rgba(200,208,222,0.75)"></div>
<div style="position:absolute;left:-2.00px;top:417.50px;width:233.20px;height:1.00px;background:rgba(200,208,222,0.75)"></div>
<div style="position:absolute;left:233.80px;top:417.50px;width:272.50px;height:1.00px;background:rgba(200,208,222,0.75)"></div>
<div style="position:absolute;left:-2.00px;top:430.25px;width:233.20px;height:1.00px;background:rgba(200,208,222,0.75)"></div>
<div style="position:absolute;left:233.80px;top:430.25px;width:272.50px;height:1.00px;background:rgba(200,208,222,0.75)"></div>
<div style="position:absolute;left:-2.00px;top:443.00px;width:233.20px;height:1.00px;background:rgba(200,208,222,0.75)"></div>
<div style="position:absolute;left:233.80px;top:443.00px;width:272.50px;height:1.00px;background:rgba(200,208,222,0.75)"></div>
<div style="position:absolute;left:-2.00px;top:455.75px;width:233.20px;height:1.00px;background:rgba(200,208,222,0.75)"></div>
<div style="position:absolute;left:233.80px;top:455.75px;width:272.50px;height:1.00px;background:rgba(200,208,222,0.75)"></div>
<div style="position:absolute;left:-2.00px;top:468.50px;width:233.20px;height:1.00px;background:rgba(200,208,222,0.75)"></div>
<div style="position:absolute;left:233.80px;top:468.50px;width:272.50px;height:1.00px;background:rgba(200,208,222,0.75)"></div>
<div style="position:absolute;left:-2.00px;top:481.25px;width:233.20px;height:1.00px;background:rgba(200,208,222,0.75)"></div>
<div style="position:absolute;left:233.80px;top:481.25px;width:272.50px;height:1.00px;background:rgba(200,208,222,0.75)"></div>
<div style="position:absolute;left:-2.00px;top:494.00px;width:233.20px;height:1.00px;background:rgba(200,208,222,0.75)"></div>
<div style="position:absolute;left:233.80px;top:494.00px;width:272.50px;height:1.00px;background:rgba(200,208,222,0.75)"></div>
<div style="position:absolute;left:-2.00px;top:506.75px;width:233.20px;height:1.00px;background:rgba(200,208,222,0.75)"></div>
<div style="position:absolute;left:233.80px;top:506.75px;width:272.50px;height:1.00px;background:rgba(200,208,222,0.75)"></div>
<div style="position:absolute;left:-2.00px;top:519.50px;width:233.20px;height:1.00px;background:rgba(200,208,222,0.75)"></div>
<div style="position:absolute;left:233.80px;top:519.50px;width:272.50px;height:1.00px;background:rgba(200,208,222,0.75)"></div>
<div style="position:absolute;left:-2.00px;top:532.25px;width:233.20px;height:1.00px;background:rgba(200,208,222,0.75)"></div>
<div style="position:absolute;left:233.80px;top:532.25px;width:272.50px;height:1.00px;background:rgba(200,208,222,0.75)"></div>
<div style="position:absolute;left:-2.00px;top:545.00px;width:233.20px;height:1.00px;background:rgba(200,208,222,0.75)"></div>
<div style="position:absolute;left:233.80px;top:545.00px;width:272.50px;height:1.00px;background:rgba(200,208,222,0.75)"></div>
<div style="position:absolute;left:-2.00px;top:557.75px;width:233.20px;height:1.00px;background:rgba(200,208,222,0.75)"></div>
<div style="position:absolute;left:233.80px;top:557.75px;width:272.50px;height:1.00px;background:rgba(200,208,222,0.75)"></div>
<div style="position:absolute;left:-2.00px;top:570.50px;width:233.20px;height:1.00px;background:rgba(200,208,222,0.75)"></div>
<div style="position:absolute;left:233.80px;top:570.50px;width:272.50px;height:1.00px;background:rgba(200,208,222,0.75)"></div>
<div style="position:absolute;left:-2.00px;top:583.25px;width:233.20px;height:1.00px;background:rgba(200,208,222,0.75)"></div>
<div style="position:absolute;left:233.80px;top:583.25px;width:272.50px;height:1.00px;background:rgba(200,208,222,0.75)"></div>
<div style="position:absolute;left:-2.00px;top:596.00px;width:233.20px;height:1.00px;background:rgba(200,208,222,0.75)"></div>
<div style="position:absolute;left:233.80px;top:596.00px;width:272.50px;height:1.00px;background:rgba(200,208,222,0.75)"></div>
<div style="position:absolute;left:27.10px;top:341.50px;width:1.00px;height:264.90px;background:rgba(200,208,222,0.75)"></div>
<div style="position:absolute;left:67.70px;top:341.50px;width:1.00px;height:264.90px;background:rgba(200,208,222,0.75)"></div>
<div style="position:absolute;left:108.00px;top:341.50px;width:1.00px;height:264.90px;background:rgba(200,208,222,0.75)"></div>
<div style="position:absolute;left:148.00px;top:341.50px;width:1.00px;height:264.90px;background:rgba(200,208,222,0.75)"></div>
<div style="position:absolute;left:188.00px;top:341.50px;width:1.00px;height:264.90px;background:rgba(200,208,222,0.75)"></div>
<div style="position:absolute;left:271.60px;top:341.50px;width:1.00px;height:264.90px;background:rgba(200,208,222,0.75)"></div>
<div style="position:absolute;left:309.90px;top:341.50px;width:1.00px;height:264.90px;background:rgba(200,208,222,0.75)"></div>
<div style="position:absolute;left:347.70px;top:341.50px;width:1.00px;height:264.90px;background:rgba(200,208,222,0.75)"></div>
<div style="position:absolute;left:385.90px;top:341.50px;width:1.00px;height:264.90px;background:rgba(200,208,222,0.75)"></div>
<div style="position:absolute;left:424.00px;top:341.50px;width:1.00px;height:264.90px;background:rgba(200,208,222,0.75)"></div>
<div style="position:absolute;left:462.80px;top:341.50px;width:1.00px;height:264.90px;background:rgba(200,208,222,0.75)"></div>
<div style="position:absolute;left:506.30px;top:327.20px;width:0.80px;height:279.20px;background:rgba(200,208,222,0.8)"></div>
<div style="position:absolute;left:-2px;top:341.50px;width:520px;height:264.90px;overflow:hidden">
<div class="t" style="left:-272.90px;top:1.78px;width:300.00px;height:12.00px;line-height:12.00px;text-align:right;font-size:8.2px;color:#242830;">-64.42</div>
<div class="t" style="left:-232.30px;top:1.78px;width:300.00px;height:12.00px;line-height:12.00px;text-align:right;font-size:8.2px;color:#242830;">-3.41</div>
<div class="t" style="left:-272.90px;top:14.52px;width:300.00px;height:12.00px;line-height:12.00px;text-align:right;font-size:8.2px;color:#242830;">-60.17</div>
<div class="t" style="left:-232.30px;top:14.52px;width:300.00px;height:12.00px;line-height:12.00px;text-align:right;font-size:8.2px;color:#242830;">-3.67</div>
<div class="t" style="left:-272.90px;top:27.27px;width:300.00px;height:12.00px;line-height:12.00px;text-align:right;font-size:8.2px;color:#242830;">-55.92</div>
<div class="t" style="left:-232.30px;top:27.27px;width:300.00px;height:12.00px;line-height:12.00px;text-align:right;font-size:8.2px;color:#242830;">-3.90</div>
<div class="t" style="left:-272.90px;top:40.02px;width:300.00px;height:12.00px;line-height:12.00px;text-align:right;font-size:8.2px;color:#242830;">-51.83</div>
<div class="t" style="left:-232.30px;top:40.02px;width:300.00px;height:12.00px;line-height:12.00px;text-align:right;font-size:8.2px;color:#242830;">-4.03</div>
<div class="t" style="left:-192.00px;top:40.02px;width:300.00px;height:12.00px;line-height:12.00px;text-align:right;font-size:8.2px;color:#242830;">38.99</div>
<div class="t" style="left:-152.00px;top:40.02px;width:300.00px;height:12.00px;line-height:12.00px;text-align:right;font-size:8.2px;color:#242830;">4.73</div>
<div class="t" style="left:-69.30px;top:40.02px;width:300.00px;height:12.00px;line-height:12.00px;text-align:right;font-size:8.2px;color:#242830;">+1</div>
<div class="t" style="left:-272.90px;top:52.77px;width:300.00px;height:12.00px;line-height:12.00px;text-align:right;font-size:8.2px;color:#242830;">-47.80</div>
<div class="t" style="left:-232.30px;top:52.77px;width:300.00px;height:12.00px;line-height:12.00px;text-align:right;font-size:8.2px;color:#242830;">-4.17</div>
<div class="t" style="left:-192.00px;top:52.77px;width:300.00px;height:12.00px;line-height:12.00px;text-align:right;font-size:8.2px;color:#242830;">37.65</div>
<div class="t" style="left:-152.00px;top:52.77px;width:300.00px;height:12.00px;line-height:12.00px;text-align:right;font-size:8.2px;color:#242830;">3.00</div>
<div class="t" style="left:-69.30px;top:52.77px;width:300.00px;height:12.00px;line-height:12.00px;text-align:right;font-size:8.2px;color:#242830;">+1</div>
<div class="t" style="left:-272.90px;top:65.53px;width:300.00px;height:12.00px;line-height:12.00px;text-align:right;font-size:8.2px;color:#242830;">-43.97</div>
<div class="t" style="left:-232.30px;top:65.53px;width:300.00px;height:12.00px;line-height:12.00px;text-align:right;font-size:8.2px;color:#242830;">-4.27</div>
<div class="t" style="left:-272.90px;top:78.28px;width:300.00px;height:12.00px;line-height:12.00px;text-align:right;font-size:8.2px;color:#242830;">-40.34</div>
<div class="t" style="left:-232.30px;top:78.28px;width:300.00px;height:12.00px;line-height:12.00px;text-align:right;font-size:8.2px;color:#242830;">-4.31</div>
<div class="t" style="left:-272.90px;top:91.03px;width:300.00px;height:12.00px;line-height:12.00px;text-align:right;font-size:8.2px;color:#242830;">-36.95</div>
<div class="t" style="left:-232.30px;top:91.03px;width:300.00px;height:12.00px;line-height:12.00px;text-align:right;font-size:8.2px;color:#242830;">-4.33</div>
<div class="t" style="left:-192.00px;top:91.03px;width:300.00px;height:12.00px;line-height:12.00px;text-align:right;font-size:8.2px;color:#242830;">29.11</div>
<div class="t" style="left:-152.00px;top:91.03px;width:300.00px;height:12.00px;line-height:12.00px;text-align:right;font-size:8.2px;color:#242830;">5.37</div>
<div class="t" style="left:-69.30px;top:91.03px;width:300.00px;height:12.00px;line-height:12.00px;text-align:right;font-size:8.2px;color:#242830;">-4</div>
<div class="t" style="left:-272.90px;top:103.78px;width:300.00px;height:12.00px;line-height:12.00px;text-align:right;font-size:8.2px;color:#242830;">-33.74</div>
<div class="t" style="left:-232.30px;top:103.78px;width:300.00px;height:12.00px;line-height:12.00px;text-align:right;font-size:8.2px;color:#242830;">-4.30</div>
<div class="t" style="left:-272.90px;top:116.53px;width:300.00px;height:12.00px;line-height:12.00px;text-align:right;font-size:8.2px;color:#242830;">-30.81</div>
<div class="t" style="left:-232.30px;top:116.53px;width:300.00px;height:12.00px;line-height:12.00px;text-align:right;font-size:8.2px;color:#242830;">-4.26</div>
<div class="t" style="left:-272.90px;top:129.28px;width:300.00px;height:12.00px;line-height:12.00px;text-align:right;font-size:8.2px;color:#242830;">-28.02</div>
<div class="t" style="left:-232.30px;top:129.28px;width:300.00px;height:12.00px;line-height:12.00px;text-align:right;font-size:8.2px;color:#242830;">-4.16</div>
<div class="t" style="left:-272.90px;top:142.03px;width:300.00px;height:12.00px;line-height:12.00px;text-align:right;font-size:8.2px;color:#242830;">-25.49</div>
<div class="t" style="left:-232.30px;top:142.03px;width:300.00px;height:12.00px;line-height:12.00px;text-align:right;font-size:8.2px;color:#242830;">-4.07</div>
<div class="t" style="left:-192.00px;top:142.03px;width:300.00px;height:12.00px;line-height:12.00px;text-align:right;font-size:8.2px;color:#242830;">22.14</div>
<div class="t" style="left:-152.00px;top:142.03px;width:300.00px;height:12.00px;line-height:12.00px;text-align:right;font-size:8.2px;color:#242830;">5.88</div>
<div class="t" style="left:-69.30px;top:142.03px;width:300.00px;height:12.00px;line-height:12.00px;text-align:right;font-size:8.2px;color:#242830;">+1</div>
<div class="t" style="left:-272.90px;top:154.78px;width:300.00px;height:12.00px;line-height:12.00px;text-align:right;font-size:8.2px;color:#242830;">-23.17</div>
<div class="t" style="left:-232.30px;top:154.78px;width:300.00px;height:12.00px;line-height:12.00px;text-align:right;font-size:8.2px;color:#242830;">-3.95</div>
<div class="t" style="left:-112.00px;top:154.78px;width:300.00px;height:12.00px;line-height:12.00px;text-align:right;font-size:8.2px;color:#242830;">+1</div>
<div class="t" style="left:-272.90px;top:167.53px;width:300.00px;height:12.00px;line-height:12.00px;text-align:right;font-size:8.2px;color:#242830;">-21.04</div>
<div class="t" style="left:-232.30px;top:167.53px;width:300.00px;height:12.00px;line-height:12.00px;text-align:right;font-size:8.2px;color:#242830;">-3.82</div>
<div class="t" style="left:-192.00px;top:167.53px;width:300.00px;height:12.00px;line-height:12.00px;text-align:right;font-size:8.2px;color:#242830;">14.87</div>
<div class="t" style="left:-152.00px;top:167.53px;width:300.00px;height:12.00px;line-height:12.00px;text-align:right;font-size:8.2px;color:#242830;">4.01</div>
<div class="t" style="left:-112.00px;top:167.53px;width:300.00px;height:12.00px;line-height:12.00px;text-align:right;font-size:8.2px;color:#242830;">-1</div>
<div class="t" style="left:-69.30px;top:167.53px;width:300.00px;height:12.00px;line-height:12.00px;text-align:right;font-size:8.2px;color:#242830;">+1</div>
<div class="t" style="left:-272.90px;top:180.28px;width:300.00px;height:12.00px;line-height:12.00px;text-align:right;font-size:8.2px;color:#242830;">-19.11</div>
<div class="t" style="left:-232.30px;top:180.28px;width:300.00px;height:12.00px;line-height:12.00px;text-align:right;font-size:8.2px;color:#242830;">-3.69</div>
<div class="t" style="left:-272.90px;top:193.03px;width:300.00px;height:12.00px;line-height:12.00px;text-align:right;font-size:8.2px;color:#242830;">-17.34</div>
<div class="t" style="left:-232.30px;top:193.03px;width:300.00px;height:12.00px;line-height:12.00px;text-align:right;font-size:8.2px;color:#242830;">-3.55</div>
<div class="t" style="left:-272.90px;top:205.78px;width:300.00px;height:12.00px;line-height:12.00px;text-align:right;font-size:8.2px;color:#242830;">-15.75</div>
<div class="t" style="left:-232.30px;top:205.78px;width:300.00px;height:12.00px;line-height:12.00px;text-align:right;font-size:8.2px;color:#242830;">-3.40</div>
<div class="t" style="left:-272.90px;top:218.53px;width:300.00px;height:12.00px;line-height:12.00px;text-align:right;font-size:8.2px;color:#242830;">-14.31</div>
<div class="t" style="left:-232.30px;top:218.53px;width:300.00px;height:12.00px;line-height:12.00px;text-align:right;font-size:8.2px;color:#242830;">-3.26</div>
<div class="t" style="left:-272.90px;top:231.28px;width:300.00px;height:12.00px;line-height:12.00px;text-align:right;font-size:8.2px;color:#242830;">-13.00</div>
<div class="t" style="left:-232.30px;top:231.28px;width:300.00px;height:12.00px;line-height:12.00px;text-align:right;font-size:8.2px;color:#242830;">-3.11</div>
<div class="t" style="left:-272.90px;top:244.03px;width:300.00px;height:12.00px;line-height:12.00px;text-align:right;font-size:8.2px;color:#242830;">-11.84</div>
<div class="t" style="left:-232.30px;top:244.03px;width:300.00px;height:12.00px;line-height:12.00px;text-align:right;font-size:8.2px;color:#242830;">-2.98</div>
<div class="t" style="left:-272.90px;top:256.77px;width:300.00px;height:12.00px;line-height:12.00px;text-align:right;font-size:8.2px;color:#242830;">-10.78</div>
<div class="t" style="left:-232.30px;top:256.77px;width:300.00px;height:12.00px;line-height:12.00px;text-align:right;font-size:8.2px;color:#242830;">-2.84</div>
<div class="t" style="left:-28.40px;top:1.78px;width:300.00px;height:12.00px;line-height:12.00px;text-align:right;font-size:8.2px;color:#242830;color:#e8323c;">150.60</div>
<div class="t" style="left:9.90px;top:1.78px;width:300.00px;height:12.00px;line-height:12.00px;text-align:right;font-size:8.2px;color:#242830;">-63.43</div>
<div class="t" style="left:47.70px;top:1.78px;width:300.00px;height:12.00px;line-height:12.00px;text-align:right;font-size:8.2px;color:#242830;">-3.34</div>
<div class="t" style="left:-28.40px;top:14.52px;width:300.00px;height:12.00px;line-height:12.00px;text-align:right;font-size:8.2px;color:#242830;color:#2e9a32;">141.50</div>
<div class="t" style="left:9.90px;top:14.52px;width:300.00px;height:12.00px;line-height:12.00px;text-align:right;font-size:8.2px;color:#242830;">-58.90</div>
<div class="t" style="left:47.70px;top:14.52px;width:300.00px;height:12.00px;line-height:12.00px;text-align:right;font-size:8.2px;color:#242830;">-3.79</div>
<div class="t" style="left:-28.40px;top:27.27px;width:300.00px;height:12.00px;line-height:12.00px;text-align:right;font-size:8.2px;color:#242830;color:#2e9a32;">123.15</div>
<div class="t" style="left:9.90px;top:27.27px;width:300.00px;height:12.00px;line-height:12.00px;text-align:right;font-size:8.2px;color:#242830;">-55.47</div>
<div class="t" style="left:47.70px;top:27.27px;width:300.00px;height:12.00px;line-height:12.00px;text-align:right;font-size:8.2px;color:#242830;">-3.73</div>
<div class="t" style="left:-28.40px;top:40.02px;width:300.00px;height:12.00px;line-height:12.00px;text-align:right;font-size:8.2px;color:#242830;color:#e8323c;">111.85</div>
<div class="t" style="left:9.90px;top:40.02px;width:300.00px;height:12.00px;line-height:12.00px;text-align:right;font-size:8.2px;color:#242830;">-51.51</div>
<div class="t" style="left:47.70px;top:40.02px;width:300.00px;height:12.00px;line-height:12.00px;text-align:right;font-size:8.2px;color:#242830;">-3.90</div>
<div class="t" style="left:-28.40px;top:52.77px;width:300.00px;height:12.00px;line-height:12.00px;text-align:right;font-size:8.2px;color:#242830;color:#2e9a32;">101.65</div>
<div class="t" style="left:9.90px;top:52.77px;width:300.00px;height:12.00px;line-height:12.00px;text-align:right;font-size:8.2px;color:#242830;">-47.71</div>
<div class="t" style="left:47.70px;top:52.77px;width:300.00px;height:12.00px;line-height:12.00px;text-align:right;font-size:8.2px;color:#242830;">-4.04</div>
<div class="t" style="left:-28.40px;top:65.53px;width:300.00px;height:12.00px;line-height:12.00px;text-align:right;font-size:8.2px;color:#242830;color:#2e9a32;">92.15</div>
<div class="t" style="left:9.90px;top:65.53px;width:300.00px;height:12.00px;line-height:12.00px;text-align:right;font-size:8.2px;color:#242830;">-44.09</div>
<div class="t" style="left:47.70px;top:65.53px;width:300.00px;height:12.00px;line-height:12.00px;text-align:right;font-size:8.2px;color:#242830;">-4.13</div>
<div class="t" style="left:-28.40px;top:78.28px;width:300.00px;height:12.00px;line-height:12.00px;text-align:right;font-size:8.2px;color:#242830;color:#2e9a32;">83.90</div>
<div class="t" style="left:9.90px;top:78.28px;width:300.00px;height:12.00px;line-height:12.00px;text-align:right;font-size:8.2px;color:#242830;">-40.68</div>
<div class="t" style="left:47.70px;top:78.28px;width:300.00px;height:12.00px;line-height:12.00px;text-align:right;font-size:8.2px;color:#242830;">-4.19</div>
<div class="t" style="left:-28.40px;top:91.03px;width:300.00px;height:12.00px;line-height:12.00px;text-align:right;font-size:8.2px;color:#242830;color:#2e9a32;">76.15</div>
<div class="t" style="left:9.90px;top:91.03px;width:300.00px;height:12.00px;line-height:12.00px;text-align:right;font-size:8.2px;color:#242830;">-37.46</div>
<div class="t" style="left:47.70px;top:91.03px;width:300.00px;height:12.00px;line-height:12.00px;text-align:right;font-size:8.2px;color:#242830;">-4.22</div>
<div class="t" style="left:-28.40px;top:103.78px;width:300.00px;height:12.00px;line-height:12.00px;text-align:right;font-size:8.2px;color:#242830;color:#2e9a32;">69.10</div>
<div class="t" style="left:9.90px;top:103.78px;width:300.00px;height:12.00px;line-height:12.00px;text-align:right;font-size:8.2px;color:#242830;">-34.45</div>
<div class="t" style="left:47.70px;top:103.78px;width:300.00px;height:12.00px;line-height:12.00px;text-align:right;font-size:8.2px;color:#242830;">-4.21</div>
<div class="t" style="left:-28.40px;top:116.53px;width:300.00px;height:12.00px;line-height:12.00px;text-align:right;font-size:8.2px;color:#242830;color:#2e9a32;">62.30</div>
<div class="t" style="left:9.90px;top:116.53px;width:300.00px;height:12.00px;line-height:12.00px;text-align:right;font-size:8.2px;color:#242830;">-31.57</div>
<div class="t" style="left:47.70px;top:116.53px;width:300.00px;height:12.00px;line-height:12.00px;text-align:right;font-size:8.2px;color:#242830;">-4.15</div>
<div class="t" style="left:-28.40px;top:129.28px;width:300.00px;height:12.00px;line-height:12.00px;text-align:right;font-size:8.2px;color:#242830;color:#2e9a32;">56.60</div>
<div class="t" style="left:9.90px;top:129.28px;width:300.00px;height:12.00px;line-height:12.00px;text-align:right;font-size:8.2px;color:#242830;">-28.97</div>
<div class="t" style="left:47.70px;top:129.28px;width:300.00px;height:12.00px;line-height:12.00px;text-align:right;font-size:8.2px;color:#242830;">-4.10</div>
<div class="t" style="left:-28.40px;top:142.03px;width:300.00px;height:12.00px;line-height:12.00px;text-align:right;font-size:8.2px;color:#242830;color:#e8323c;">51.05</div>
<div class="t" style="left:9.90px;top:142.03px;width:300.00px;height:12.00px;line-height:12.00px;text-align:right;font-size:8.2px;color:#242830;">-26.48</div>
<div class="t" style="left:47.70px;top:142.03px;width:300.00px;height:12.00px;line-height:12.00px;text-align:right;font-size:8.2px;color:#242830;">-4.01</div>
<div class="t" style="left:-28.40px;top:154.78px;width:300.00px;height:12.00px;line-height:12.00px;text-align:right;font-size:8.2px;color:#242830;color:#2e9a32;">46.50</div>
<div class="t" style="left:9.90px;top:154.78px;width:300.00px;height:12.00px;line-height:12.00px;text-align:right;font-size:8.2px;color:#242830;">-24.27</div>
<div class="t" style="left:47.70px;top:154.78px;width:300.00px;height:12.00px;line-height:12.00px;text-align:right;font-size:8.2px;color:#242830;">-3.92</div>
<div class="t" style="left:-28.40px;top:167.53px;width:300.00px;height:12.00px;line-height:12.00px;text-align:right;font-size:8.2px;color:#242830;color:#2e9a32;">42.20</div>
<div class="t" style="left:9.90px;top:167.53px;width:300.00px;height:12.00px;line-height:12.00px;text-align:right;font-size:8.2px;color:#242830;">-22.21</div>
<div class="t" style="left:47.70px;top:167.53px;width:300.00px;height:12.00px;line-height:12.00px;text-align:right;font-size:8.2px;color:#242830;">-3.82</div>
<div class="t" style="left:-28.40px;top:180.28px;width:300.00px;height:12.00px;line-height:12.00px;text-align:right;font-size:8.2px;color:#242830;color:#e8323c;">38.15</div>
<div class="t" style="left:9.90px;top:180.28px;width:300.00px;height:12.00px;line-height:12.00px;text-align:right;font-size:8.2px;color:#242830;">-20.26</div>
<div class="t" style="left:47.70px;top:180.28px;width:300.00px;height:12.00px;line-height:12.00px;text-align:right;font-size:8.2px;color:#242830;">-3.69</div>
<div class="t" style="left:-28.40px;top:193.03px;width:300.00px;height:12.00px;line-height:12.00px;text-align:right;font-size:8.2px;color:#242830;color:#2e9a32;">34.80</div>
<div class="t" style="left:9.90px;top:193.03px;width:300.00px;height:12.00px;line-height:12.00px;text-align:right;font-size:8.2px;color:#242830;">-18.56</div>
<div class="t" style="left:47.70px;top:193.03px;width:300.00px;height:12.00px;line-height:12.00px;text-align:right;font-size:8.2px;color:#242830;">-3.58</div>
<div class="t" style="left:-28.40px;top:205.78px;width:300.00px;height:12.00px;line-height:12.00px;text-align:right;font-size:8.2px;color:#242830;color:#2e9a32;">31.65</div>
<div class="t" style="left:9.90px;top:205.78px;width:300.00px;height:12.00px;line-height:12.00px;text-align:right;font-size:8.2px;color:#242830;">-16.96</div>
<div class="t" style="left:47.70px;top:205.78px;width:300.00px;height:12.00px;line-height:12.00px;text-align:right;font-size:8.2px;color:#242830;">-3.45</div>
<div class="t" style="left:-28.40px;top:218.53px;width:300.00px;height:12.00px;line-height:12.00px;text-align:right;font-size:8.2px;color:#242830;color:#2e9a32;">28.75</div>
<div class="t" style="left:9.90px;top:218.53px;width:300.00px;height:12.00px;line-height:12.00px;text-align:right;font-size:8.2px;color:#242830;">-15.49</div>
<div class="t" style="left:47.70px;top:218.53px;width:300.00px;height:12.00px;line-height:12.00px;text-align:right;font-size:8.2px;color:#242830;">-3.32</div>
<div class="t" style="left:-28.40px;top:231.28px;width:300.00px;height:12.00px;line-height:12.00px;text-align:right;font-size:8.2px;color:#242830;color:#e8323c;">26.20</div>
<div class="t" style="left:9.90px;top:231.28px;width:300.00px;height:12.00px;line-height:12.00px;text-align:right;font-size:8.2px;color:#242830;">-14.17</div>
<div class="t" style="left:47.70px;top:231.28px;width:300.00px;height:12.00px;line-height:12.00px;text-align:right;font-size:8.2px;color:#242830;">-3.19</div>
<div class="t" style="left:-28.40px;top:244.03px;width:300.00px;height:12.00px;line-height:12.00px;text-align:right;font-size:8.2px;color:#242830;color:#2e9a32;">23.95</div>
<div class="t" style="left:9.90px;top:244.03px;width:300.00px;height:12.00px;line-height:12.00px;text-align:right;font-size:8.2px;color:#242830;">-12.97</div>
<div class="t" style="left:47.70px;top:244.03px;width:300.00px;height:12.00px;line-height:12.00px;text-align:right;font-size:8.2px;color:#242830;">-3.06</div>
<div class="t" style="left:-28.40px;top:256.77px;width:300.00px;height:12.00px;line-height:12.00px;text-align:right;font-size:8.2px;color:#242830;color:#2e9a32;">22.05</div>
<div class="t" style="left:9.90px;top:256.77px;width:300.00px;height:12.00px;line-height:12.00px;text-align:right;font-size:8.2px;color:#242830;">-11.93</div>
<div class="t" style="left:47.70px;top:256.77px;width:300.00px;height:12.00px;line-height:12.00px;text-align:right;font-size:8.2px;color:#242830;">-2.95</div>
</div>
<div style="position:absolute;left:507.10px;top:341.50px;width:10.30px;height:264.90px;background:#d9dee8"></div>
<svg style="position:absolute;left:508px;top:345px" width="8" height="5"><path d="M0.5 4 L3.8 0.8 L7 4 Z" fill="#4a5468"/></svg>
<div style="position:absolute;left:508.30px;top:435.40px;width:6.80px;height:20.40px;background:#a9b3c3"></div>
<svg style="position:absolute;left:508px;top:599px" width="8" height="5"><path d="M0.5 0.8 L3.8 4 L7 0.8 Z" fill="#4a5468"/></svg>
<svg style="position:absolute;left:204.0px;top:608.5px" width="13" height="4"><g stroke="#a3abbb" stroke-width="0.6" fill="none"><path d="M0.2 0.3 L2.6 3.2 M2.6 0.3 L0.2 3.2"/><path d="M3.2 0.3 L5.6 3.2 M5.6 0.3 L3.2 3.2"/><path d="M6.2 0.3 L8.6 3.2 M8.6 0.3 L6.2 3.2"/><path d="M9.2 0.3 L11.6 3.2 M11.6 0.3 L9.2 3.2"/></g></svg>
<div style="position:absolute;left:-2.00px;top:616.20px;width:66.50px;height:12.50px;background:#fff;border:1px solid #aab4c4;box-sizing:border-box"></div>
<div class="t" style="left:-2.00px;top:616.50px;width:300.00px;height:12.00px;line-height:12.00px;text-align:left;font-size:8.6px;color:#333">d</div>
<svg style="position:absolute;left:56.5px;top:621px" width="6" height="4"><path d="M0 0 H5 L2.5 3 Z" fill="#555"/></svg>
<div style="position:absolute;left:70.00px;top:616.20px;width:53.30px;height:12.50px;background:#fff;border:1px solid #aab4c4;box-sizing:border-box"></div>
<div class="t" style="left:73.00px;top:616.50px;width:300.00px;height:12.00px;line-height:12.00px;text-align:left;font-size:8.6px;color:#333">Auto</div>
<svg style="position:absolute;left:115px;top:621px" width="6" height="4"><path d="M0 0 H5 L2.5 3 Z" fill="#555"/></svg>
<div style="position:absolute;left:422.40px;top:618.10px;width:7.80px;height:7.80px;background:#fff;border:1px solid #8c96a8;box-sizing:border-box"></div>
<div class="t" style="left:433.60px;top:616.60px;width:300.00px;height:12.00px;line-height:12.00px;text-align:left;font-size:8.6px;color:#333">Ignore Today's Trades</div>
<div style="position:absolute;left:-4.00px;top:631.70px;width:522.30px;height:39.70px;background:#fff;border:1px solid #bcc5d4;box-sizing:border-box"></div>
<div style="position:absolute;left:-3.00px;top:632.70px;width:520.30px;height:12.30px;background:#f2f6fb"></div>
<div style="position:absolute;left:-4.00px;top:645.00px;width:522.30px;height:1.00px;background:#dfe5ee"></div>
<div style="position:absolute;left:-4.00px;top:657.70px;width:522.30px;height:1.00px;background:#dfe5ee"></div>
<div style="position:absolute;left:43.75px;top:631.70px;width:1.00px;height:38.70px;background:#dfe5ee"></div>
<div style="position:absolute;left:90.50px;top:631.70px;width:1.00px;height:38.70px;background:#dfe5ee"></div>
<div style="position:absolute;left:137.00px;top:631.70px;width:1.00px;height:38.70px;background:#dfe5ee"></div>
<div style="position:absolute;left:184.50px;top:631.70px;width:1.00px;height:38.70px;background:#dfe5ee"></div>
<div style="position:absolute;left:230.75px;top:631.70px;width:1.00px;height:38.70px;background:#dfe5ee"></div>
<div style="position:absolute;left:278.00px;top:631.70px;width:1.00px;height:38.70px;background:#dfe5ee"></div>
<div style="position:absolute;left:325.20px;top:631.70px;width:1.00px;height:38.70px;background:#dfe5ee"></div>
<div style="position:absolute;left:371.90px;top:631.70px;width:1.00px;height:38.70px;background:#dfe5ee"></div>
<div style="position:absolute;left:419.00px;top:631.70px;width:1.00px;height:38.70px;background:#dfe5ee"></div>
<div style="position:absolute;left:465.70px;top:631.70px;width:1.00px;height:38.70px;background:#dfe5ee"></div>
<div class="t" style="left:-14.00px;top:632.65px;width:67.75px;height:12.00px;line-height:12.00px;text-align:center;font-size:8.2px;color:#242830;color:#3a3a4a">Cost</div>
<div class="t" style="left:33.75px;top:632.65px;width:66.75px;height:12.00px;line-height:12.00px;text-align:center;font-size:8.2px;color:#242830;color:#3a3a4a">Curr Cost</div>
<div class="t" style="left:80.50px;top:632.65px;width:66.50px;height:12.00px;line-height:12.00px;text-align:center;font-size:8.2px;color:#242830;color:#3a3a4a">Commission</div>
<div class="t" style="left:127.00px;top:632.65px;width:67.50px;height:12.00px;line-height:12.00px;text-align:center;font-size:8.2px;color:#242830;color:#3a3a4a">PnL</div>
<div class="t" style="left:174.50px;top:632.65px;width:66.25px;height:12.00px;line-height:12.00px;text-align:center;font-size:8.2px;color:#242830;color:#3a3a4a">PnL%</div>
<div class="t" style="left:220.75px;top:632.65px;width:67.25px;height:12.00px;line-height:12.00px;text-align:center;font-size:8.2px;color:#242830;color:#3a3a4a">Delta</div>
<div class="t" style="left:268.00px;top:632.65px;width:67.20px;height:12.00px;line-height:12.00px;text-align:center;font-size:8.2px;color:#242830;color:#3a3a4a">Gamma</div>
<div class="t" style="left:315.20px;top:632.65px;width:66.70px;height:12.00px;line-height:12.00px;text-align:center;font-size:8.2px;color:#242830;color:#3a3a4a">Theta</div>
<div class="t" style="left:361.90px;top:632.65px;width:67.10px;height:12.00px;line-height:12.00px;text-align:center;font-size:8.2px;color:#242830;color:#3a3a4a">Vega</div>
<div class="t" style="left:409.00px;top:632.65px;width:66.70px;height:12.00px;line-height:12.00px;text-align:center;font-size:8.2px;color:#242830;color:#3a3a4a">T/D</div>
<div class="t" style="left:455.70px;top:632.65px;width:72.60px;height:12.00px;line-height:12.00px;text-align:center;font-size:8.2px;color:#242830;color:#3a3a4a">Plot</div>
<div class="t" style="left:-258.75px;top:646.85px;width:300.00px;height:12.00px;line-height:12.00px;text-align:right;font-size:8.2px;color:#242830;">83.18</div>
<div class="t" style="left:-212.00px;top:646.85px;width:300.00px;height:12.00px;line-height:12.00px;text-align:right;font-size:8.2px;color:#242830;">410.00</div>
<div class="t" style="left:-165.50px;top:646.85px;width:300.00px;height:12.00px;line-height:12.00px;text-align:right;font-size:8.2px;color:#242830;">16.80</div>
<div class="t" style="left:-118.00px;top:646.85px;width:300.00px;height:12.00px;line-height:12.00px;text-align:right;font-size:8.2px;color:#242830;color:#2e9a32;">493.18</div>
<div class="t" style="left:-71.75px;top:646.85px;width:300.00px;height:12.00px;line-height:12.00px;text-align:right;font-size:8.2px;color:#242830;color:#2e9a32;">83.64%</div>
<div class="t" style="left:-24.50px;top:646.85px;width:300.00px;height:12.00px;line-height:12.00px;text-align:right;font-size:8.2px;color:#242830;">1.63</div>
<div class="t" style="left:22.70px;top:646.85px;width:300.00px;height:12.00px;line-height:12.00px;text-align:right;font-size:8.2px;color:#242830;">-0.03</div>
<div class="t" style="left:69.40px;top:646.85px;width:300.00px;height:12.00px;line-height:12.00px;text-align:right;font-size:8.2px;color:#242830;">124.35</div>
<div class="t" style="left:116.50px;top:646.85px;width:300.00px;height:12.00px;line-height:12.00px;text-align:right;font-size:8.2px;color:#242830;">-117.24</div>
<div class="t" style="left:163.20px;top:646.85px;width:300.00px;height:12.00px;line-height:12.00px;text-align:right;font-size:8.2px;color:#242830;">76.3</div>
<div class="t" style="left:-258.75px;top:659.55px;width:300.00px;height:12.00px;line-height:12.00px;text-align:right;font-size:8.2px;color:#242830;">-334.22</div>
<div class="t" style="left:-212.00px;top:659.55px;width:300.00px;height:12.00px;line-height:12.00px;text-align:right;font-size:8.2px;color:#242830;">825.00</div>
<div class="t" style="left:-165.50px;top:659.55px;width:300.00px;height:12.00px;line-height:12.00px;text-align:right;font-size:8.2px;color:#242830;">19.20</div>
<div class="t" style="left:-118.00px;top:659.55px;width:300.00px;height:12.00px;line-height:12.00px;text-align:right;font-size:8.2px;color:#242830;color:#2e9a32;">490.78</div>
<div class="t" style="left:-71.75px;top:659.55px;width:300.00px;height:12.00px;line-height:12.00px;text-align:right;font-size:8.2px;color:#242830;color:#2e9a32;">9.20%</div>
<div class="t" style="left:-24.50px;top:659.55px;width:300.00px;height:12.00px;line-height:12.00px;text-align:right;font-size:8.2px;color:#242830;">-0.50</div>
<div class="t" style="left:22.70px;top:659.55px;width:300.00px;height:12.00px;line-height:12.00px;text-align:right;font-size:8.2px;color:#242830;">-0.03</div>
<div class="t" style="left:69.40px;top:659.55px;width:300.00px;height:12.00px;line-height:12.00px;text-align:right;font-size:8.2px;color:#242830;">111.43</div>
<div class="t" style="left:116.50px;top:659.55px;width:300.00px;height:12.00px;line-height:12.00px;text-align:right;font-size:8.2px;color:#242830;">-98.60</div>
<div class="t" style="left:163.20px;top:659.55px;width:300.00px;height:12.00px;line-height:12.00px;text-align:right;font-size:8.2px;color:#242830;">222.9</div>
<svg style="position:absolute;left:487.5px;top:646.4px" width="10" height="10"><rect x="0.5" y="0.5" width="8.5" height="8.5" rx="1" fill="#fff" stroke="#a0a8b8" stroke-width="0.8"/><path d="M2 4.5 L4 6.8 L8 1.8" fill="none" stroke="#5a6478" stroke-width="1"/></svg>
<svg style="position:absolute;left:487.5px;top:659.1px" width="10" height="10"><rect x="0.5" y="0.5" width="8.5" height="8.5" rx="1" fill="#fff" stroke="#a0a8b8" stroke-width="0.8"/><path d="M2 4.5 L4 6.8 L8 1.8" fill="none" stroke="#5a6478" stroke-width="1"/></svg>
<div style="position:absolute;left:0.00px;top:672.00px;width:1080.00px;height:3.00px;background:#b3bac8"></div>
<div style="position:absolute;left:526.00px;top:109.00px;width:1.00px;height:563.00px;background:#c3cad6"></div>
<svg style="position:absolute;left:520.8px;top:385.7px" width="4" height="13"><g fill="#a8b0c0"><rect y="0" x="0" width="1" height="1"/><rect y="1" x="1" width="1" height="1"/><rect y="2" x="0" width="1" height="1"/><rect y="0" x="2" width="1" height="1"/><rect y="2" x="2" width="1" height="1"/><rect y="3" x="0" width="1" height="1"/><rect y="4" x="1" width="1" height="1"/><rect y="5" x="0" width="1" height="1"/><rect y="3" x="2" width="1" height="1"/><rect y="5" x="2" width="1" height="1"/><rect y="6" x="0" width="1" height="1"/><rect y="7" x="1" width="1" height="1"/><rect y="8" x="0" width="1" height="1"/><rect y="6" x="2" width="1" height="1"/><rect y="8" x="2" width="1" height="1"/><rect y="9" x="0" width="1" height="1"/><rect y="10" x="1" width="1" height="1"/><rect y="11" x="0" width="1" height="1"/><rect y="9" x="2" width="1" height="1"/><rect y="11" x="2" width="1" height="1"/></g></svg>
<div style="position:absolute;left:527.00px;top:109.20px;width:553.00px;height:562.80px;background:#d6dce9"></div>
<div style="position:absolute;left:526.70px;top:128.20px;width:553.30px;height:1.00px;background:#aeb8c8"></div>
<div style="position:absolute;left:527.00px;top:110.80px;width:50.60px;height:18.50px;background:#d8dfeb;border:1px solid #aeb8c8;border-bottom:none;box-sizing:border-box"></div>
<div class="t" style="left:452.80px;top:113.20px;width:200.00px;height:12.00px;line-height:12.00px;text-align:center;font-size:8.3px;color:#2d3748">Risk Chart</div>
<div style="position:absolute;left:576.60px;top:111.00px;width:54.90px;height:17.30px;background:#d0d8e6;border:1px solid #aeb8c8;box-sizing:border-box"></div>
<div class="t" style="left:504.55px;top:113.20px;width:200.00px;height:12.00px;line-height:12.00px;text-align:center;font-size:8.3px;color:#2d3748">Price Chart</div>
<div style="position:absolute;left:630.50px;top:111.00px;width:84.70px;height:17.30px;background:#d0d8e6;border:1px solid #aeb8c8;box-sizing:border-box"></div>
<div class="t" style="left:573.35px;top:113.20px;width:200.00px;height:12.00px;line-height:12.00px;text-align:center;font-size:8.3px;color:#2d3748">Movement Analysis</div>
<div style="position:absolute;left:714.20px;top:111.00px;width:46.10px;height:17.30px;background:#d0d8e6;border:1px solid #aeb8c8;box-sizing:border-box"></div>
<div class="t" style="left:637.75px;top:113.20px;width:200.00px;height:12.00px;line-height:12.00px;text-align:center;font-size:8.3px;color:#2d3748">Volatility</div>
<div style="position:absolute;left:759.30px;top:111.00px;width:109.40px;height:17.30px;background:#d0d8e6;border:1px solid #aeb8c8;box-sizing:border-box"></div>
<div class="t" style="left:714.50px;top:113.20px;width:200.00px;height:12.00px;line-height:12.00px;text-align:center;font-size:8.3px;color:#2d3748">Statistics &amp; Fundamentals</div>
<div class="t" style="left:531.30px;top:130.80px;width:300.00px;height:12.00px;line-height:12.00px;text-align:left;font-size:8.6px;color:#333">Vol Adjust</div>
<div style="position:absolute;left:572.50px;top:130.30px;width:35.00px;height:13.00px;background:#fff;border:1px solid #b4bdcc;box-sizing:border-box"></div>
<div class="t" style="left:586.20px;top:130.80px;width:10.00px;height:12.00px;line-height:12.00px;text-align:center;font-size:8.6px;color:#333">0</div>
<svg style="position:absolute;left:598.5px;top:131.5px" width="7" height="11"><path d="M0.8 3.6 L3.3 1.0 L5.8 3.6 Z" fill="#444"/><path d="M0.8 7.4 L3.3 10 L5.8 7.4 Z" fill="#444"/></svg>
<div class="t" style="left:1017.80px;top:131.20px;width:300.00px;height:12.00px;line-height:12.00px;text-align:left;font-size:8.6px;color:#333">Projection</div>
<div style="position:absolute;left:1058.00px;top:130.80px;width:30.00px;height:13.00px;background:#fff;border:1px solid #b4bdcc;box-sizing:border-box"></div>
<div class="t" style="left:1060.00px;top:131.20px;width:300.00px;height:12.00px;line-height:12.00px;text-align:left;font-size:8.6px;color:#333">21/11</div>
<div style="position:absolute;left:527.30px;top:145.80px;width:552.70px;height:509.10px;background:#fff"></div>
<div style="position:absolute;left:527.20px;top:654.90px;width:552.80px;height:16.70px;background:#293853"></div>
<div class="t" style="left:786.00px;top:657.40px;width:300.00px;height:12.00px;line-height:12.00px;text-align:right;color:#e6eaf2;font-size:8.6px">220%</div>
<svg style="position:absolute;left:0;top:0" width="1080" height="675" viewBox="0 0 1080 675">
<rect x="763.8" y="158.1" width="169.7" height="356.1" fill="#93cbdb"/>
<rect x="806.2" y="158.1" width="86.2" height="356.1" fill="#4b7fbe"/>
<line x1="561.5" y1="158.10" x2="1080" y2="158.10" stroke="#000" stroke-opacity="0.10" stroke-width="1"/>
<line x1="763.8" y1="158.10" x2="933.5" y2="158.10" stroke="#fff" stroke-opacity="0.55" stroke-width="1"/>
<line x1="561.5" y1="171.80" x2="1080" y2="171.80" stroke="#000" stroke-opacity="0.10" stroke-width="1"/>
<line x1="763.8" y1="171.80" x2="933.5" y2="171.80" stroke="#fff" stroke-opacity="0.55" stroke-width="1"/>
<line x1="561.5" y1="185.49" x2="1080" y2="185.49" stroke="#000" stroke-opacity="0.10" stroke-width="1"/>
<line x1="763.8" y1="185.49" x2="933.5" y2="185.49" stroke="#fff" stroke-opacity="0.55" stroke-width="1"/>
<line x1="561.5" y1="199.19" x2="1080" y2="199.19" stroke="#000" stroke-opacity="0.10" stroke-width="1"/>
<line x1="763.8" y1="199.19" x2="933.5" y2="199.19" stroke="#fff" stroke-opacity="0.55" stroke-width="1"/>
<line x1="561.5" y1="212.88" x2="1080" y2="212.88" stroke="#000" stroke-opacity="0.10" stroke-width="1"/>
<line x1="763.8" y1="212.88" x2="933.5" y2="212.88" stroke="#fff" stroke-opacity="0.55" stroke-width="1"/>
<line x1="561.5" y1="226.58" x2="1080" y2="226.58" stroke="#000" stroke-opacity="0.10" stroke-width="1"/>
<line x1="763.8" y1="226.58" x2="933.5" y2="226.58" stroke="#fff" stroke-opacity="0.55" stroke-width="1"/>
<line x1="561.5" y1="240.28" x2="1080" y2="240.28" stroke="#000" stroke-opacity="0.10" stroke-width="1"/>
<line x1="763.8" y1="240.28" x2="933.5" y2="240.28" stroke="#fff" stroke-opacity="0.55" stroke-width="1"/>
<line x1="561.5" y1="253.97" x2="1080" y2="253.97" stroke="#000" stroke-opacity="0.10" stroke-width="1"/>
<line x1="763.8" y1="253.97" x2="933.5" y2="253.97" stroke="#fff" stroke-opacity="0.55" stroke-width="1"/>
<line x1="561.5" y1="267.67" x2="1080" y2="267.67" stroke="#000" stroke-opacity="0.10" stroke-width="1"/>
<line x1="763.8" y1="267.67" x2="933.5" y2="267.67" stroke="#fff" stroke-opacity="0.55" stroke-width="1"/>
<line x1="561.5" y1="281.37" x2="1080" y2="281.37" stroke="#000" stroke-opacity="0.10" stroke-width="1"/>
<line x1="763.8" y1="281.37" x2="933.5" y2="281.37" stroke="#fff" stroke-opacity="0.55" stroke-width="1"/>
<line x1="561.5" y1="295.06" x2="1080" y2="295.06" stroke="#000" stroke-opacity="0.10" stroke-width="1"/>
<line x1="763.8" y1="295.06" x2="933.5" y2="295.06" stroke="#fff" stroke-opacity="0.55" stroke-width="1"/>
<line x1="561.5" y1="308.76" x2="1080" y2="308.76" stroke="#000" stroke-opacity="0.10" stroke-width="1"/>
<line x1="763.8" y1="308.76" x2="933.5" y2="308.76" stroke="#fff" stroke-opacity="0.55" stroke-width="1"/>
<line x1="561.5" y1="322.45" x2="1080" y2="322.45" stroke="#000" stroke-opacity="0.10" stroke-width="1"/>
<line x1="763.8" y1="322.45" x2="933.5" y2="322.45" stroke="#fff" stroke-opacity="0.55" stroke-width="1"/>
<line x1="561.5" y1="336.15" x2="1080" y2="336.15" stroke="#000" stroke-opacity="0.10" stroke-width="1"/>
<line x1="763.8" y1="336.15" x2="933.5" y2="336.15" stroke="#fff" stroke-opacity="0.55" stroke-width="1"/>
<line x1="561.5" y1="349.85" x2="1080" y2="349.85" stroke="#000" stroke-opacity="0.10" stroke-width="1"/>
<line x1="763.8" y1="349.85" x2="933.5" y2="349.85" stroke="#fff" stroke-opacity="0.55" stroke-width="1"/>
<line x1="561.5" y1="363.54" x2="1080" y2="363.54" stroke="#000" stroke-opacity="0.10" stroke-width="1"/>
<line x1="763.8" y1="363.54" x2="933.5" y2="363.54" stroke="#fff" stroke-opacity="0.55" stroke-width="1"/>
<line x1="561.5" y1="377.24" x2="1080" y2="377.24" stroke="#000" stroke-opacity="0.10" stroke-width="1"/>
<line x1="763.8" y1="377.24" x2="933.5" y2="377.24" stroke="#fff" stroke-opacity="0.55" stroke-width="1"/>
<line x1="561.5" y1="390.93" x2="1080" y2="390.93" stroke="#000" stroke-opacity="0.10" stroke-width="1"/>
<line x1="763.8" y1="390.93" x2="933.5" y2="390.93" stroke="#fff" stroke-opacity="0.55" stroke-width="1"/>
<line x1="561.5" y1="404.63" x2="1080" y2="404.63" stroke="#000" stroke-opacity="0.10" stroke-width="1"/>
<line x1="763.8" y1="404.63" x2="933.5" y2="404.63" stroke="#fff" stroke-opacity="0.55" stroke-width="1"/>
<line x1="561.5" y1="418.33" x2="1080" y2="418.33" stroke="#000" stroke-opacity="0.10" stroke-width="1"/>
<line x1="763.8" y1="418.33" x2="933.5" y2="418.33" stroke="#fff" stroke-opacity="0.55" stroke-width="1"/>
<line x1="561.5" y1="432.02" x2="1080" y2="432.02" stroke="#000" stroke-opacity="0.10" stroke-width="1"/>
<line x1="763.8" y1="432.02" x2="933.5" y2="432.02" stroke="#fff" stroke-opacity="0.55" stroke-width="1"/>
<line x1="561.5" y1="445.72" x2="1080" y2="445.72" stroke="#000" stroke-opacity="0.10" stroke-width="1"/>
<line x1="763.8" y1="445.72" x2="933.5" y2="445.72" stroke="#fff" stroke-opacity="0.55" stroke-width="1"/>
<line x1="561.5" y1="459.42" x2="1080" y2="459.42" stroke="#000" stroke-opacity="0.10" stroke-width="1"/>
<line x1="763.8" y1="459.42" x2="933.5" y2="459.42" stroke="#fff" stroke-opacity="0.55" stroke-width="1"/>
<line x1="561.5" y1="473.11" x2="1080" y2="473.11" stroke="#000" stroke-opacity="0.10" stroke-width="1"/>
<line x1="763.8" y1="473.11" x2="933.5" y2="473.11" stroke="#fff" stroke-opacity="0.55" stroke-width="1"/>
<line x1="561.5" y1="486.81" x2="1080" y2="486.81" stroke="#000" stroke-opacity="0.10" stroke-width="1"/>
<line x1="763.8" y1="486.81" x2="933.5" y2="486.81" stroke="#fff" stroke-opacity="0.55" stroke-width="1"/>
<line x1="561.5" y1="500.50" x2="1080" y2="500.50" stroke="#000" stroke-opacity="0.10" stroke-width="1"/>
<line x1="763.8" y1="500.50" x2="933.5" y2="500.50" stroke="#fff" stroke-opacity="0.55" stroke-width="1"/>
<line x1="561.5" y1="514.20" x2="1080" y2="514.20" stroke="#000" stroke-opacity="0.10" stroke-width="1"/>
<line x1="763.8" y1="514.20" x2="933.5" y2="514.20" stroke="#fff" stroke-opacity="0.55" stroke-width="1"/>
<line x1="627.60" y1="158.1" x2="627.60" y2="516.2" stroke="#000" stroke-opacity="0.10" stroke-width="1"/>
<line x1="692.85" y1="158.1" x2="692.85" y2="516.2" stroke="#000" stroke-opacity="0.10" stroke-width="1"/>
<line x1="758.10" y1="158.1" x2="758.10" y2="516.2" stroke="#000" stroke-opacity="0.10" stroke-width="1"/>
<line x1="823.35" y1="158.1" x2="823.35" y2="516.2" stroke="#000" stroke-opacity="0.10" stroke-width="1"/>
<line x1="823.35" y1="158.1" x2="823.35" y2="514.2" stroke="#fff" stroke-opacity="0.6" stroke-width="1"/>
<line x1="888.60" y1="158.1" x2="888.60" y2="516.2" stroke="#000" stroke-opacity="0.10" stroke-width="1"/>
<line x1="888.60" y1="158.1" x2="888.60" y2="514.2" stroke="#fff" stroke-opacity="0.6" stroke-width="1"/>
<line x1="953.85" y1="158.1" x2="953.85" y2="516.2" stroke="#000" stroke-opacity="0.10" stroke-width="1"/>
<line x1="1019.10" y1="158.1" x2="1019.10" y2="516.2" stroke="#000" stroke-opacity="0.10" stroke-width="1"/>
<line x1="1084.35" y1="158.1" x2="1084.35" y2="516.2" stroke="#000" stroke-opacity="0.10" stroke-width="1"/>
<line x1="564.8" y1="158.1" x2="564.8" y2="514.2" stroke="#000" stroke-opacity="0.12" stroke-width="1"/>
<text x="560" y="160.90" text-anchor="end" font-size="7.5px" fill="#333">3053%</text>
<text x="560" y="174.60" text-anchor="end" font-size="7.5px" fill="#333">2883%</text>
<text x="560" y="188.29" text-anchor="end" font-size="7.5px" fill="#333">2714%</text>
<text x="560" y="201.99" text-anchor="end" font-size="7.5px" fill="#333">2544%</text>
<text x="560" y="215.68" text-anchor="end" font-size="7.5px" fill="#333">2374%</text>
<text x="560" y="229.38" text-anchor="end" font-size="7.5px" fill="#333">2205%</text>
<text x="560" y="243.08" text-anchor="end" font-size="7.5px" fill="#333">2035%</text>
<text x="560" y="256.77" text-anchor="end" font-size="7.5px" fill="#333">1866%</text>
<text x="560" y="270.47" text-anchor="end" font-size="7.5px" fill="#333">1696%</text>
<text x="560" y="284.17" text-anchor="end" font-size="7.5px" fill="#333">1526%</text>
<text x="560" y="297.86" text-anchor="end" font-size="7.5px" fill="#333">1367%</text>
<text x="560" y="311.56" text-anchor="end" font-size="7.5px" fill="#333">1187%</text>
<text x="560" y="325.25" text-anchor="end" font-size="7.5px" fill="#333">1018%</text>
<text x="560" y="338.95" text-anchor="end" font-size="7.5px" fill="#333">848%</text>
<text x="560" y="352.65" text-anchor="end" font-size="7.5px" fill="#333">678%</text>
<text x="560" y="366.34" text-anchor="end" font-size="7.5px" fill="#333">509%</text>
<text x="560" y="380.04" text-anchor="end" font-size="7.5px" fill="#333">339%</text>
<text x="560" y="393.73" text-anchor="end" font-size="7.5px" fill="#333">170%</text>
<text x="560" y="407.43" text-anchor="end" font-size="7.5px" fill="#333">0%</text>
<text x="560" y="421.13" text-anchor="end" font-size="7.5px" fill="#333">-170%</text>
<text x="560" y="434.82" text-anchor="end" font-size="7.5px" fill="#333">-339%</text>
<text x="560" y="448.52" text-anchor="end" font-size="7.5px" fill="#333">-509%</text>
<text x="560" y="462.22" text-anchor="end" font-size="7.5px" fill="#333">-678%</text>
<text x="560" y="475.91" text-anchor="end" font-size="7.5px" fill="#333">-848%</text>
<text x="560" y="489.61" text-anchor="end" font-size="7.5px" fill="#333">-1018%</text>
<text x="560" y="503.30" text-anchor="end" font-size="7.5px" fill="#333">-1187%</text>
<text x="560" y="517.00" text-anchor="end" font-size="7.5px" fill="#333">-1357%</text>
<line x1="751.35" y1="158.1" x2="751.35" y2="514.2" stroke="#c878c8" stroke-width="1.3" stroke-dasharray="3 2.5"/>
<line x1="869.97" y1="158.1" x2="869.97" y2="514.2" stroke="#8a2aa8" stroke-width="1.1" stroke-dasharray="2.5 2.5"/>
<text transform="translate(771.0,160.5) rotate(-90)" font-size="7.6px" fill="#5c90bc" text-anchor="end">6408.71</text>
<text transform="translate(814.0,160.5) rotate(-90)" font-size="7.6px" fill="#8fb2dc" text-anchor="end">6473.73</text>
<text transform="translate(891.0,160.5) rotate(-90)" font-size="7.6px" fill="#8fb2dc" text-anchor="end">6605.79</text>
<text transform="translate(932.5,160.5) rotate(-90)" font-size="7.6px" fill="#5c90bc" text-anchor="end">6668.81</text>
<text transform="translate(749.5,485.0) rotate(-90)" font-size="7.6px" fill="#a050b0" text-anchor="end">6389.66</text>
<text transform="translate(868.5,485.0) rotate(-90)" font-size="7.6px" fill="#8a2aa8" text-anchor="end">6571.45</text>
<text x="657" y="509" text-anchor="middle" font-size="7.8px" fill="#9a40c8">25.0%</text>
<text x="810" y="509" text-anchor="middle" font-size="7.8px" fill="#9a40c8">27.8%</text>
<text x="1007.3" y="509" text-anchor="middle" font-size="7.8px" fill="#9a40c8">47.3%</text>
<rect x="854" y="394.2" width="19.3" height="6.6" fill="#c8a088" opacity="0.8"/>
<line x1="564.8" y1="404.7" x2="1080" y2="404.7" stroke="#5e626c" stroke-width="1.3"/>
<path d="M564.0 442.5 L595.0 435.0 L626.7 427.4 L660.0 420.2 L693.3 413.9 L715.0 409.2 L735.8 404.7" fill="none" stroke="#f06060" stroke-width="1.1"/>
<path d="M735.8 404.7 L760.0 402.0 L803.0 398.7 L856.0 397.8 L903.0 397.5 L960.0 399.0 L1020.0 401.2 L1080.0 402.9" fill="none" stroke="#58e058" stroke-width="1.1"/>
<path d="M564.0 461.3 L595.0 452.0 L626.7 442.4 L660.0 432.4 L693.3 422.8 L727.0 414.5 L760.0 409.2 L775.0 404.9" fill="none" stroke="#f06060" stroke-width="1.1"/>
<path d="M775.0 404.9 L788.0 403.3 L805.0 401.0 L823.0 399.2 L856.0 398.3 L900.0 398.7 L960.0 400.5 L1020.0 403.2 L1050.0 404.5" fill="none" stroke="#58e058" stroke-width="1.1"/>
<path d="M1030.0 405.2 L1080.0 406.2" fill="none" stroke="#f06060" stroke-width="1.1"/>
<path d="M564.8 505.8 L709.2 505.8 L741.8 437.0 L807.0 166.0 L856.0 376.5 L872.3 403.3 L1080.0 403.3" fill="none" stroke="#3c46c8" stroke-width="1.7" stroke-linejoin="round"/>
<path d="M564.8 477.3 L725.5 477.3 L741.8 442.0 L807.0 172.0 L856.0 378.0 L872.3 408.4 L1080.0 408.4" fill="none" stroke="#17892a" stroke-width="1.7" stroke-linejoin="round"/>
<circle cx="856.2" cy="398" r="2.7" fill="#3ad8e0" stroke="#2a3a50" stroke-width="0.8"/>
<rect x="567.5" y="161.5" width="111.2" height="83.8" rx="4" fill="#dde4ee" fill-opacity="0.88" stroke="#8c9cb4" stroke-width="0.9"/>
<rect x="573" y="166.6" width="2.5" height="8.5" fill="#e03838"/>
<text x="575.6" y="174.0" font-size="7.7px" letter-spacing="0.06" xml:space="preserve"><tspan fill="#555">-197.33 Realized PnL</tspan></text>
<rect x="573" y="176.0" width="2.5" height="8.5" fill="#38d038"/>
<text x="575.6" y="183.4" font-size="7.7px" letter-spacing="0.06" xml:space="preserve"><tspan fill="#555">-1 </tspan><tspan fill="#f04848">02dic. 6325 Put Δ  -21.04</tspan></text>
<rect x="573" y="185.4" width="2.5" height="8.5" fill="#38d038"/>
<text x="575.6" y="192.8" font-size="7.7px" letter-spacing="0.06" xml:space="preserve"><tspan fill="#555">+1 </tspan><tspan fill="#4858e0">02dic. 6350 Put Δ  -23.17</tspan></text>
<rect x="573" y="194.8" width="2.5" height="8.5" fill="#7890e0"/>
<text x="575.6" y="202.2" font-size="7.7px" letter-spacing="0.06" xml:space="preserve"><tspan fill="#555">+1 </tspan><tspan fill="#4858e0">02dic. 6575 Put Δ  -51.83</tspan></text>
<rect x="573" y="204.2" width="2.5" height="8.5" fill="#7890e0"/>
<text x="575.6" y="211.6" font-size="7.7px" letter-spacing="0.06" xml:space="preserve"><tspan fill="#555">+1 </tspan><tspan fill="#4858e0">02dic. 6375 Put Δ  -25.49</tspan></text>
<rect x="573" y="213.6" width="2.5" height="8.5" fill="#7890e0"/>
<text x="575.6" y="221.0" font-size="7.7px" letter-spacing="0.06" xml:space="preserve"><tspan fill="#555">-4 </tspan><tspan fill="#f04848">02dic. 6475 Put Δ  -36.95</tspan></text>
<rect x="573" y="223.0" width="2.5" height="8.5" fill="#7890e0"/>
<text x="575.6" y="230.4" font-size="7.7px" letter-spacing="0.06" xml:space="preserve"><tspan fill="#555">+1 </tspan><tspan fill="#4858e0">02dic. 6550 Put Δ  -47.80</tspan></text>
<rect x="573" y="232.4" width="2.5" height="8.5" fill="#7890e0"/>
<text x="575.6" y="239.8" font-size="7.7px" letter-spacing="0.06" xml:space="preserve"><tspan fill="#555">+1 </tspan><tspan fill="#4858e0">02dic. 6325 Put Δ  -21.04</tspan></text>
<rect x="567.3" y="482.4" width="63.2" height="28.4" rx="4" fill="#dde4ee" fill-opacity="0.8" stroke="#8c9cb4" stroke-width="0.9"/>
<text x="572.8" y="495.4" font-size="7.7px" fill="#52b052" letter-spacing="0.1">02/12/2025 (0)</text>
<text x="572.8" y="504.9" font-size="7.7px" fill="#78e078" letter-spacing="0.1">21/11/2025 (11)</text>
<rect x="531.4" y="393.1" width="30" height="9.1" fill="#0c980c"/>
<text x="559.5" y="400.6" text-anchor="end" font-size="7.8px" fill="#fff">83%</text>
<text x="627.2" y="154" text-anchor="middle" font-size="8px" fill="#333">-5.2%</text>
<text x="692" y="154" text-anchor="middle" font-size="8px" fill="#333">-3.7%</text>
<text x="757.3" y="154" text-anchor="middle" font-size="8px" fill="#333">-2.1%</text>
<text x="823.3" y="154" text-anchor="middle" font-size="8px" fill="#333">-0.6%</text>
<text x="888" y="154" text-anchor="middle" font-size="8px" fill="#333">0.9%</text>
<text x="953.5" y="154" text-anchor="middle" font-size="8px" fill="#333">2.5%</text>
<text x="1019" y="154" text-anchor="middle" font-size="8px" fill="#333">4.0%</text>
<text x="1084.3" y="154" text-anchor="middle" font-size="8px" fill="#333">5.6%</text>
<rect x="846" y="146" width="19.6" height="8.8" fill="#fff" stroke="#555" stroke-width="0.9"/>
<text x="855.8" y="154" text-anchor="middle" font-size="8px" fill="#333">0.2%</text>
<text x="627.6" y="525.6" text-anchor="middle" font-size="8px" fill="#333">6200</text>
<text x="692.9" y="525.6" text-anchor="middle" font-size="8px" fill="#333">6300</text>
<text x="758.1" y="525.6" text-anchor="middle" font-size="8px" fill="#333">6400</text>
<text x="823.4" y="525.6" text-anchor="middle" font-size="8px" fill="#333">6500</text>
<text x="888.6" y="525.6" text-anchor="middle" font-size="8px" fill="#333">6600</text>
<text x="953.9" y="525.6" text-anchor="middle" font-size="8px" fill="#333">6700</text>
<text x="1019.1" y="525.6" text-anchor="middle" font-size="8px" fill="#333">6800</text>
<text x="1084.3" y="525.6" text-anchor="middle" font-size="8px" fill="#333">6900</text>
<rect x="530.5" y="528.6" width="560" height="123.1" rx="4" fill="#e8eef7" stroke="#8c9ab0" stroke-width="0.9"/>
<rect x="839.7" y="517" width="32.8" height="133.6" rx="3.5" fill="#edf2f9" stroke="#8a96aa" stroke-width="0.9"/>
<text x="856.1" y="525.6" text-anchor="middle" font-size="8px" fill="#333">6550.18</text>
<text x="548" y="550.5" text-anchor="middle" font-size="8px" fill="#686c74">PnL</text>
<text x="548" y="578.5" text-anchor="middle" font-size="8px" fill="#686c74">Delta</text>
<text x="548" y="600.1" text-anchor="middle" font-size="8px" fill="#686c74">Gamma</text>
<text x="548" y="621.3" text-anchor="middle" font-size="8px" fill="#686c74">Theta</text>
<text x="548" y="642.8" text-anchor="middle" font-size="8px" fill="#686c74">Vega</text>
<line x1="564.9" y1="546.7" x2="839.7" y2="546.7" stroke="#585c66" stroke-width="1"/>
<line x1="872.5" y1="546.7" x2="1080" y2="546.7" stroke="#585c66" stroke-width="1"/>
<line x1="564.9" y1="575.2" x2="839.7" y2="575.2" stroke="#585c66" stroke-width="1"/>
<line x1="872.5" y1="575.2" x2="1080" y2="575.2" stroke="#585c66" stroke-width="1"/>
<line x1="564.9" y1="596.7" x2="839.7" y2="596.7" stroke="#585c66" stroke-width="1"/>
<line x1="872.5" y1="596.7" x2="1080" y2="596.7" stroke="#585c66" stroke-width="1"/>
<line x1="564.9" y1="618" x2="839.7" y2="618" stroke="#585c66" stroke-width="1"/>
<line x1="872.5" y1="618" x2="1080" y2="618" stroke="#585c66" stroke-width="1"/>
<line x1="564.9" y1="639.3" x2="839.7" y2="639.3" stroke="#585c66" stroke-width="1"/>
<line x1="872.5" y1="639.3" x2="1080" y2="639.3" stroke="#585c66" stroke-width="1"/>
<rect x="564.9" y="546.7" width="95.6" height="7.0" fill="#f07474" stroke="#5a5e68" stroke-width="0.7"/>
<rect x="660.5" y="546.7" width="65.1" height="2.6" fill="#f07474" stroke="#5a5e68" stroke-width="0.7"/>
<rect x="725.6" y="545.5" width="65.4" height="1.2" fill="#5574f0" stroke="#5a5e68" stroke-width="0.7"/>
<rect x="791.0" y="545.0" width="48.7" height="1.7" fill="#5574f0" stroke="#5a5e68" stroke-width="0.7"/>
<rect x="872.5" y="545.0" width="49.2" height="1.7" fill="#5574f0" stroke="#5a5e68" stroke-width="0.7"/>
<rect x="564.9" y="568.0" width="95.6" height="7.2" fill="#5574f0" stroke="#5a5e68" stroke-width="0.7"/>
<rect x="660.5" y="569.8" width="65.1" height="5.4" fill="#5574f0" stroke="#5a5e68" stroke-width="0.7"/>
<rect x="725.6" y="572.6" width="65.4" height="2.6" fill="#5574f0" stroke="#5a5e68" stroke-width="0.7"/>
<rect x="791.0" y="574.6" width="48.7" height="0.6" fill="#5574f0" stroke="#5a5e68" stroke-width="0.7"/>
<rect x="872.5" y="575.2" width="49.2" height="1.3" fill="#f07474" stroke="#5a5e68" stroke-width="0.7"/>
<rect x="921.7" y="575.2" width="65.3" height="1.8" fill="#f07474" stroke="#5a5e68" stroke-width="0.7"/>
<rect x="987.0" y="575.2" width="65.0" height="1.8" fill="#f07474" stroke="#5a5e68" stroke-width="0.7"/>
<rect x="564.9" y="596.7" width="95.6" height="2.3" fill="#f07474" stroke="#5a5e68" stroke-width="0.7"/>
<rect x="660.5" y="596.7" width="65.1" height="6.8" fill="#f07474" stroke="#5a5e68" stroke-width="0.7"/>
<rect x="725.6" y="596.7" width="65.4" height="6.8" fill="#f07474" stroke="#5a5e68" stroke-width="0.7"/>
<rect x="791.0" y="596.7" width="48.7" height="6.6" fill="#f07474" stroke="#5a5e68" stroke-width="0.7"/>
<rect x="872.5" y="596.7" width="49.2" height="3.9" fill="#f07474" stroke="#5a5e68" stroke-width="0.7"/>
<rect x="987.0" y="595.6" width="65.0" height="1.1" fill="#5574f0" stroke="#5a5e68" stroke-width="0.7"/>
<rect x="1052.0" y="595.6" width="38.0" height="1.1" fill="#5574f0" stroke="#5a5e68" stroke-width="0.7"/>
<rect x="564.9" y="618.0" width="95.6" height="4.4" fill="#f07474" stroke="#5a5e68" stroke-width="0.7"/>
<rect x="660.5" y="616.7" width="65.1" height="1.3" fill="#5574f0" stroke="#5a5e68" stroke-width="0.7"/>
<rect x="725.6" y="612.6" width="65.4" height="5.4" fill="#5574f0" stroke="#5a5e68" stroke-width="0.7"/>
<rect x="791.0" y="611.1" width="48.7" height="6.9" fill="#5574f0" stroke="#5a5e68" stroke-width="0.7"/>
<rect x="872.5" y="611.1" width="49.2" height="6.9" fill="#5574f0" stroke="#5a5e68" stroke-width="0.7"/>
<rect x="921.7" y="615.0" width="65.3" height="3.0" fill="#5574f0" stroke="#5a5e68" stroke-width="0.7"/>
<rect x="987.0" y="616.5" width="65.0" height="1.5" fill="#5574f0" stroke="#5a5e68" stroke-width="0.7"/>
<rect x="1052.0" y="617.0" width="38.0" height="1.0" fill="#5574f0" stroke="#5a5e68" stroke-width="0.7"/>
<rect x="660.5" y="639.3" width="65.1" height="3.9" fill="#f07474" stroke="#5a5e68" stroke-width="0.7"/>
<rect x="725.6" y="639.3" width="65.4" height="7.0" fill="#f07474" stroke="#5a5e68" stroke-width="0.7"/>
<rect x="791.0" y="639.3" width="48.7" height="6.7" fill="#f07474" stroke="#5a5e68" stroke-width="0.7"/>
<rect x="872.5" y="639.3" width="49.2" height="3.2" fill="#f07474" stroke="#5a5e68" stroke-width="0.7"/>
<rect x="921.7" y="639.3" width="65.3" height="1.7" fill="#f07474" stroke="#5a5e68" stroke-width="0.7"/>
<rect x="987.0" y="639.3" width="65.0" height="0.7" fill="#f07474" stroke="#5a5e68" stroke-width="0.7"/>
<text x="627.6" y="539.7" text-anchor="middle" font-size="7.8px" fill="#f06868">-280%</text>
<text x="627.6" y="546.7" text-anchor="middle" font-size="7.8px" fill="#f06868">-1648</text>
<text x="692.7" y="539.7" text-anchor="middle" font-size="7.8px" fill="#f06868">-97%</text>
<text x="692.7" y="546.7" text-anchor="middle" font-size="7.8px" fill="#f06868">-570</text>
<text x="758" y="554.4" text-anchor="middle" font-size="7.8px" fill="#5a6af0">169</text>
<text x="758" y="561.2" text-anchor="middle" font-size="7.8px" fill="#5a6af0">29%</text>
<text x="823.6" y="554.2" text-anchor="middle" font-size="7.8px" fill="#5a6af0">478</text>
<text x="823.6" y="560.8" text-anchor="middle" font-size="7.8px" fill="#5a6af0">81%</text>
<text x="888.3" y="554.2" text-anchor="middle" font-size="7.8px" fill="#5a6af0">436</text>
<text x="888.3" y="560.8" text-anchor="middle" font-size="7.8px" fill="#5a6af0">74%</text>
<text x="953.6" y="554.2" text-anchor="middle" font-size="7.8px" fill="#5a6af0">220</text>
<text x="953.6" y="560.8" text-anchor="middle" font-size="7.8px" fill="#5a6af0">37%</text>
<text x="1019" y="540.0" text-anchor="middle" font-size="7.8px" fill="#f06868">-2%</text>
<text x="1019" y="547.2" text-anchor="middle" font-size="7.8px" fill="#f06868">-13</text>
<text x="1084" y="540.0" text-anchor="middle" font-size="7.8px" fill="#f06868">-2%</text>
<text x="1084" y="547.2" text-anchor="middle" font-size="7.8px" fill="#f06868">-19</text>
<text x="627.6" y="583.0" text-anchor="middle" font-size="7.8px" fill="#5a6af0">11.74</text>
<text x="692.7" y="583.0" text-anchor="middle" font-size="7.8px" fill="#5a6af0">9.39</text>
<text x="758" y="583.0" text-anchor="middle" font-size="7.8px" fill="#5a6af0">5.24</text>
<text x="823.6" y="583.0" text-anchor="middle" font-size="7.8px" fill="#5a6af0">1.08</text>
<text x="888.3" y="574.8" text-anchor="middle" font-size="7.8px" fill="#f06868">-1.60</text>
<text x="953.6" y="574.8" text-anchor="middle" font-size="7.8px" fill="#f06868">-2.46</text>
<text x="1019" y="574.8" text-anchor="middle" font-size="7.8px" fill="#f06868">-2.08</text>
<text x="1084" y="574.8" text-anchor="middle" font-size="7.8px" fill="#f06868">-1.8</text>
<text x="627.6" y="596.6" text-anchor="middle" font-size="7.8px" fill="#f06868">-0.01</text>
<text x="692.7" y="596.6" text-anchor="middle" font-size="7.8px" fill="#f06868">-0.04</text>
<text x="758" y="596.6" text-anchor="middle" font-size="7.8px" fill="#f06868">-0.04</text>
<text x="823.6" y="596.6" text-anchor="middle" font-size="7.8px" fill="#f06868">-0.04</text>
<text x="888.3" y="596.6" text-anchor="middle" font-size="7.8px" fill="#f06868">-0.02</text>
<text x="953.6" y="603.9" text-anchor="middle" font-size="7.8px" fill="#5a6af0">0.00</text>
<text x="1019" y="603.9" text-anchor="middle" font-size="7.8px" fill="#5a6af0">0.01</text>
<text x="1084" y="603.9" text-anchor="middle" font-size="7.8px" fill="#5a6af0">0.01</text>
<text x="627.6" y="618.0" text-anchor="middle" font-size="7.8px" fill="#f06868">-72.06</text>
<text x="692.7" y="625.7" text-anchor="middle" font-size="7.8px" fill="#5a6af0">23.75</text>
<text x="758" y="625.7" text-anchor="middle" font-size="7.8px" fill="#5a6af0">97.54</text>
<text x="823.6" y="625.7" text-anchor="middle" font-size="7.8px" fill="#5a6af0">119.31</text>
<text x="888.3" y="625.7" text-anchor="middle" font-size="7.8px" fill="#5a6af0">95.41</text>
<text x="953.6" y="625.7" text-anchor="middle" font-size="7.8px" fill="#5a6af0">54.62</text>
<text x="1019" y="625.7" text-anchor="middle" font-size="7.8px" fill="#5a6af0">21.81</text>
<text x="1084" y="625.7" text-anchor="middle" font-size="7.8px" fill="#5a6af0">4.6</text>
<text x="627.6" y="647.3" text-anchor="middle" font-size="7.8px" fill="#5a6af0">10.93</text>
<text x="692.7" y="639.2" text-anchor="middle" font-size="7.8px" fill="#f06868">-69.58</text>
<text x="758" y="639.2" text-anchor="middle" font-size="7.8px" fill="#f06868">-118.59</text>
<text x="823.6" y="639.2" text-anchor="middle" font-size="7.8px" fill="#f06868">-115.87</text>
<text x="888.3" y="639.2" text-anchor="middle" font-size="7.8px" fill="#f06868">-76.02</text>
<text x="953.6" y="639.2" text-anchor="middle" font-size="7.8px" fill="#f06868">-30.31</text>
<text x="1019" y="639.2" text-anchor="middle" font-size="7.8px" fill="#f06868">-0.74</text>
<text x="1084" y="647.3" text-anchor="middle" font-size="7.8px" fill="#5a6af0">9.1</text>
<rect x="842" y="542.0" width="28" height="6" fill="#c8ccd4" opacity="0.18"/>
<rect x="842" y="572.5" width="28" height="6" fill="#c8ccd4" opacity="0.18"/>
<rect x="842" y="594.5" width="28" height="6" fill="#c8ccd4" opacity="0.18"/>
<rect x="842" y="615.5" width="28" height="6" fill="#c8ccd4" opacity="0.18"/>
<rect x="842" y="637.0" width="28" height="6" fill="#c8ccd4" opacity="0.18"/>
<text x="856.1" y="547.9" text-anchor="middle" font-size="8.4px" fill="#3a48e0">491</text>
<text x="856.1" y="558.2" text-anchor="middle" font-size="8.4px" fill="#3a48e0">83.2%</text>
<text x="856.1" y="579.3" text-anchor="middle" font-size="8.4px" fill="#e83838">-0.50</text>
<text x="856.1" y="601.2" text-anchor="middle" font-size="8.4px" fill="#e83838">-0.03</text>
<text x="856.1" y="622.1" text-anchor="middle" font-size="8.4px" fill="#3a48e0">111.43</text>
<text x="856.1" y="644.3" text-anchor="middle" font-size="8.4px" fill="#e83838">-96.60</text>
</svg>
</body></html>
